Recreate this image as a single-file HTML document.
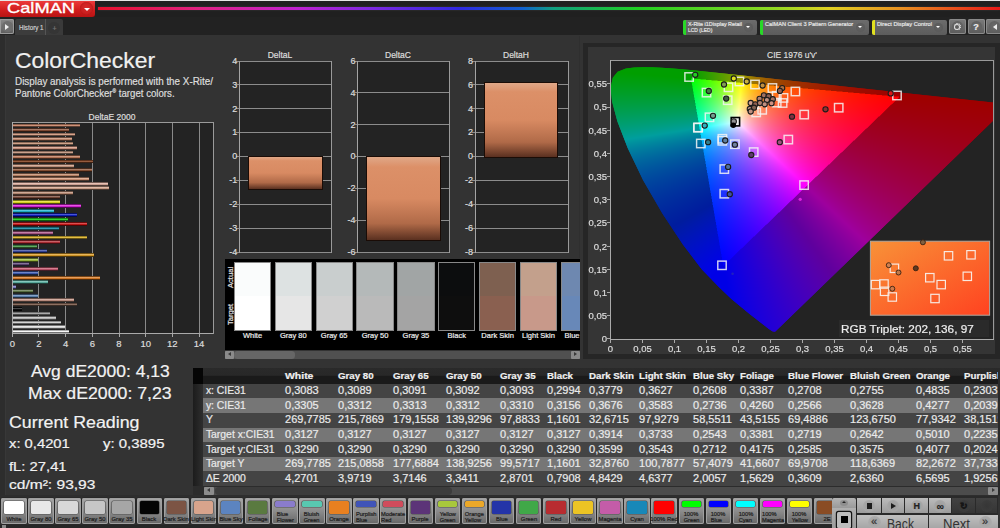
<!DOCTYPE html>
<html><head><meta charset="utf-8"><style>
html,body{margin:0;padding:0;}
body{width:1000px;height:528px;overflow:hidden;position:relative;background:#333;font-family:"Liberation Sans", sans-serif;}
.r{position:absolute;}
.t{position:absolute;white-space:nowrap;line-height:1;-webkit-text-stroke:0.2px currentColor;}
</style></head><body>
<div class="r" style="left:0px;top:0px;width:1000px;height:17px;background:#202020"></div>
<div class="r" style="left:0px;top:0px;width:1000px;height:1px;background:#e6e6e6"></div>
<div class="r" style="left:0px;top:1px;width:95px;height:16px;background:linear-gradient(#ec3a3a,#d01c1c 60%,#b81414);border-radius:0 0 3px 0;box-shadow:0 1px 0 #5a1010"></div>
<div class="t" style="left:7.00px;top:1.07px;font-size:14.8px;color:#fff;font-weight:normal;transform-origin:0 0;transform:scaleX(1.2345);-webkit-text-stroke:0.35px #fff">CalMAN</div>
<div class="r" style="left:80px;top:2px;width:13px;height:13px;border-radius:50%;background:radial-gradient(circle at 50% 40%,#d82a2a,#c01818);box-shadow:inset 0 0 1px #a01010"></div>
<div class="r" style="left:83.5px;top:7.5px;width:0;height:0;border-left:3px solid transparent;border-right:3px solid transparent;border-top:3px solid #fff"></div>
<div class="r" style="left:98px;top:7px;width:902px;height:3px;background:linear-gradient(90deg,#e8102a 0%,#e02080 11%,#c020d0 22%,#8028e0 30%,#3028e0 40%,#1060d0 47%,#10a080 50.5%,#20d020 60%,#90d820 75%,#e0d020 81%,#e89020 89%,#e81818 100%);box-shadow:0 0 2px rgba(255,255,255,0.15)"></div>
<div class="r" style="left:0px;top:17px;width:1000px;height:18px;background:#222"></div>
<div class="r" style="left:0px;top:19px;width:14px;height:15px;background:linear-gradient(#8a8a8a,#5c5c5c);border-radius:0 2px 2px 0;box-shadow:inset 0 0 0 1px #9a9a9a"></div>
<div class="r" style="left:1.5px;top:21px;width:11px;height:11px;border-radius:50%;background:#6e6e6e"></div>
<div class="r" style="left:5px;top:23.5px;width:0;height:0;border-top:3.5px solid transparent;border-bottom:3.5px solid transparent;border-left:4px solid #eee"></div>
<div class="r" style="left:15px;top:19px;width:30px;height:16px;background:#3c3c3c;border-radius:2px 0 0 0"></div>
<div class="t" style="left:18.50px;top:24.03px;font-size:8px;color:#d0d0d0;font-weight:normal;transform-origin:0 0;transform:scaleX(0.7762);">History 1</div>
<div class="r" style="left:45px;top:19px;width:1px;height:16px;background:#555"></div>
<div class="r" style="left:46px;top:19px;width:17px;height:16px;background:#3a3a3a;border-radius:0 2px 0 0"></div>
<div class="r" style="left:48px;top:22px;width:12px;height:12px;border-radius:50%;background:#353535"></div>
<div class="t" style="left:49.50px;width:10px;text-align:center;top:24.57px;font-size:7px;color:#777;font-weight:normal;transform-origin:50% 0;">+</div>
<div class="r" style="left:683px;top:19.5px;width:74px;height:15.2px;background:linear-gradient(#6c6c6c,#5c5c5c);border-radius:2px"></div>
<div class="r" style="left:683px;top:19.5px;width:3px;height:15.2px;background:#28d828;border-radius:2px 0 0 2px"></div>
<div class="t" style="left:688.00px;top:20.95px;font-size:6.2px;color:#e8e8e8;font-weight:normal;transform-origin:0 0;transform:scaleX(0.8773);">X-Rite i1Display Retail</div>
<div class="t" style="left:688.00px;top:27.35px;font-size:6.2px;color:#e8e8e8;font-weight:normal;transform-origin:0 0;transform:scaleX(0.8032);">LCD (LED)</div>
<div class="r" style="left:743.8px;top:22.8px;width:9.4px;height:9.4px;border-radius:50%;background:radial-gradient(#646464,#565656)"></div>
<div class="r" style="left:745.7px;top:26.3px;width:0;height:0;border-left:2.8px solid transparent;border-right:2.8px solid transparent;border-top:2.8px solid #fff"></div>
<div class="r" style="left:760px;top:19.5px;width:109px;height:15.2px;background:linear-gradient(#6c6c6c,#5c5c5c);border-radius:2px"></div>
<div class="r" style="left:760px;top:19.5px;width:3px;height:15.2px;background:#28d828;border-radius:2px 0 0 2px"></div>
<div class="t" style="left:765.00px;top:20.95px;font-size:6.2px;color:#e8e8e8;font-weight:normal;transform-origin:0 0;transform:scaleX(0.9095);">CalMAN Client 3 Pattern Generator</div>
<div class="r" style="left:855.8px;top:22.8px;width:9.4px;height:9.4px;border-radius:50%;background:radial-gradient(#646464,#565656)"></div>
<div class="r" style="left:857.7px;top:26.3px;width:0;height:0;border-left:2.8px solid transparent;border-right:2.8px solid transparent;border-top:2.8px solid #fff"></div>
<div class="r" style="left:872px;top:19.5px;width:75px;height:15.2px;background:linear-gradient(#6c6c6c,#5c5c5c);border-radius:2px"></div>
<div class="r" style="left:872px;top:19.5px;width:3px;height:15.2px;background:#e0e020;border-radius:2px 0 0 2px"></div>
<div class="t" style="left:877.00px;top:20.95px;font-size:6.2px;color:#e8e8e8;font-weight:normal;transform-origin:0 0;transform:scaleX(0.9193);">Direct Display Control</div>
<div class="r" style="left:933.8px;top:22.8px;width:9.4px;height:9.4px;border-radius:50%;background:radial-gradient(#646464,#565656)"></div>
<div class="r" style="left:935.7px;top:26.3px;width:0;height:0;border-left:2.8px solid transparent;border-right:2.8px solid transparent;border-top:2.8px solid #fff"></div>
<div class="r" style="left:948.5px;top:19.2px;width:17.2px;height:14.7px;background:linear-gradient(#7c7c7c,#5a5a5a);border-radius:2px;box-shadow:inset 0 0 0 1px #8a8a8a"></div>
<div class="r" style="left:951.6px;top:21px;width:11px;height:11px;border-radius:50%;background:radial-gradient(#6a6a6a,#5c5c5c)"></div>
<div class="r" style="left:953.6px;top:23px;width:5px;height:5px;border-radius:50%;border:1.5px dotted #eee"></div>
<div class="r" style="left:955.1px;top:24.5px;width:4px;height:4px;border-radius:50%;background:#5e5e5e;box-shadow:0 0 0 1px #ddd"></div>
<div class="r" style="left:967.5px;top:19.2px;width:17.2px;height:14.7px;background:linear-gradient(#7c7c7c,#5a5a5a);border-radius:2px;box-shadow:inset 0 0 0 1px #8a8a8a"></div>
<div class="r" style="left:970.6px;top:21px;width:11px;height:11px;border-radius:50%;background:radial-gradient(#6a6a6a,#5c5c5c)"></div>
<div class="t" style="left:968.10px;width:16px;text-align:center;top:22.88px;font-size:9px;color:#eee;font-weight:bold;transform-origin:50% 0;">?</div>
<div class="r" style="left:986px;top:19.2px;width:17.2px;height:14.7px;background:linear-gradient(#7c7c7c,#5a5a5a);border-radius:2px;box-shadow:inset 0 0 0 1px #8a8a8a"></div>
<div class="r" style="left:989.1px;top:21px;width:11px;height:11px;border-radius:50%;background:radial-gradient(#6a6a6a,#5c5c5c)"></div>
<div class="r" style="left:992.5px;top:23.5px;width:0;height:0;border-top:3px solid transparent;border-bottom:3px solid transparent;border-right:4px solid #eee"></div>
<div class="r" style="left:0px;top:35px;width:1000px;height:493px;background:#333"></div>
<div class="r" style="left:0px;top:35px;width:5px;height:460px;background:#2d2d2d"></div>
<div class="r" style="left:5px;top:35px;width:1px;height:460px;background:#383838"></div>
<div class="t" style="left:15.00px;top:49.55px;font-size:21.8px;color:#f0f0f0;font-weight:normal;transform-origin:0 0;transform:scaleX(1.0507);">ColorChecker</div>
<div class="t" style="left:15.00px;top:77.13px;font-size:10px;color:#ddd;font-weight:normal;transform-origin:0 0;transform:scaleX(0.9869);">Display analysis is performed with the X-Rite/</div>
<div class="t" style="left:15.00px;top:89.33px;font-size:10px;color:#ddd;font-weight:normal;transform-origin:0 0;transform:scaleX(0.9645);">Pantone ColorChecker<span style="font-size:5px;vertical-align:4px">®</span> target colors.</div>
<div class="t" style="left:52.00px;width:120px;text-align:center;top:113.30px;font-size:8.5px;color:#ddd;font-weight:normal;transform-origin:50% 0;">DeltaE 2000</div>
<div class="r" style="left:12.3px;top:122.8px;width:201.1px;height:210.95px;background:#232323"></div>
<div class="r" style="left:38.48px;top:122.8px;width:1px;height:210.95px;background:#8a8a8a"></div>
<div class="r" style="left:65.16px;top:122.8px;width:1px;height:210.95px;background:#8a8a8a"></div>
<div class="r" style="left:91.84px;top:122.8px;width:1px;height:210.95px;background:#8a8a8a"></div>
<div class="r" style="left:118.52px;top:122.8px;width:1px;height:210.95px;background:#8a8a8a"></div>
<div class="r" style="left:145.2px;top:122.8px;width:1px;height:210.95px;background:#8a8a8a"></div>
<div class="r" style="left:171.88px;top:122.8px;width:1px;height:210.95px;background:#8a8a8a"></div>
<div class="r" style="left:198.56px;top:122.8px;width:1px;height:210.95px;background:#8a8a8a"></div>
<div class="r" style="left:11.8px;top:122.3px;width:201.6px;height:1px;background:#9a9a9a"></div>
<div class="r" style="left:212.9px;top:122.3px;width:1px;height:211.45px;background:#9a9a9a"></div>
<div class="r" style="left:11.8px;top:122.3px;width:1px;height:213.95px;background:#aaa"></div>
<div class="r" style="left:11.8px;top:333.25px;width:201.6px;height:1px;background:#aaa"></div>
<div class="r" style="left:11.8px;top:333.75px;width:1px;height:3px;background:#aaa"></div>
<div class="t" style="left:-2.70px;width:30px;text-align:center;top:339.46px;font-size:9.5px;color:#ddd;font-weight:normal;transform-origin:50% 0;">0</div>
<div class="r" style="left:38.48px;top:333.75px;width:1px;height:3px;background:#aaa"></div>
<div class="t" style="left:23.98px;width:30px;text-align:center;top:339.46px;font-size:9.5px;color:#ddd;font-weight:normal;transform-origin:50% 0;">2</div>
<div class="r" style="left:65.16px;top:333.75px;width:1px;height:3px;background:#aaa"></div>
<div class="t" style="left:50.66px;width:30px;text-align:center;top:339.46px;font-size:9.5px;color:#ddd;font-weight:normal;transform-origin:50% 0;">4</div>
<div class="r" style="left:91.84px;top:333.75px;width:1px;height:3px;background:#aaa"></div>
<div class="t" style="left:77.34px;width:30px;text-align:center;top:339.46px;font-size:9.5px;color:#ddd;font-weight:normal;transform-origin:50% 0;">6</div>
<div class="r" style="left:118.52px;top:333.75px;width:1px;height:3px;background:#aaa"></div>
<div class="t" style="left:104.02px;width:30px;text-align:center;top:339.46px;font-size:9.5px;color:#ddd;font-weight:normal;transform-origin:50% 0;">8</div>
<div class="r" style="left:145.2px;top:333.75px;width:1px;height:3px;background:#aaa"></div>
<div class="t" style="left:130.70px;width:30px;text-align:center;top:339.46px;font-size:9.5px;color:#ddd;font-weight:normal;transform-origin:50% 0;">10</div>
<div class="r" style="left:171.88px;top:333.75px;width:1px;height:3px;background:#aaa"></div>
<div class="t" style="left:157.38px;width:30px;text-align:center;top:339.46px;font-size:9.5px;color:#ddd;font-weight:normal;transform-origin:50% 0;">12</div>
<div class="r" style="left:198.56px;top:333.75px;width:1px;height:3px;background:#aaa"></div>
<div class="t" style="left:184.06px;width:30px;text-align:center;top:339.46px;font-size:9.5px;color:#ddd;font-weight:normal;transform-origin:50% 0;">14</div>
<div class="r" style="left:12.90px;top:123.70px;width:67.30px;height:3.8px;background:linear-gradient(#000 0%, #96644f 18%, #d5a48f 38%, #c8866a 58%, #644335 82%, #000 100%)"></div>
<div class="r" style="left:12.90px;top:128.17px;width:56.36px;height:3.8px;background:linear-gradient(#000 0%, #673c2a 18%, #a77b69 38%, #8a5038 58%, #45281c 82%, #000 100%)"></div>
<div class="r" style="left:12.90px;top:132.65px;width:61.83px;height:3.8px;background:linear-gradient(#000 0%, #9d7360 18%, #ddb39f 38%, #d29a80 58%, #694d40 82%, #000 100%)"></div>
<div class="r" style="left:12.90px;top:137.12px;width:58.63px;height:3.8px;background:linear-gradient(#000 0%, #966954 18%, #d5a893 38%, #c88c70 58%, #644638 82%, #000 100%)"></div>
<div class="r" style="left:12.90px;top:141.60px;width:60.50px;height:3.8px;background:linear-gradient(#000 0%, #99735e 18%, #d8b39e 38%, #cc9a7e 58%, #664d3f 82%, #000 100%)"></div>
<div class="r" style="left:12.90px;top:146.07px;width:63.83px;height:3.8px;background:linear-gradient(#000 0%, #a07363 18%, #e0b3a2 38%, #d69a84 58%, #6b4d42 82%, #000 100%)"></div>
<div class="r" style="left:12.90px;top:150.55px;width:59.83px;height:3.8px;background:linear-gradient(#000 0%, #937261 18%, #d2b1a1 38%, #c49882 58%, #624c41 82%, #000 100%)"></div>
<div class="r" style="left:12.90px;top:155.02px;width:66.63px;height:3.8px;background:linear-gradient(#000 0%, #905b43 18%, #cf9b83 38%, #c07a5a 58%, #603d2d 82%, #000 100%)"></div>
<div class="r" style="left:12.90px;top:159.50px;width:80.37px;height:3.8px;background:linear-gradient(#000 0%, #67371f 18%, #a7775f 38%, #8a4a2a 58%, #452515 82%, #000 100%)"></div>
<div class="r" style="left:12.90px;top:163.97px;width:61.16px;height:3.8px;background:linear-gradient(#000 0%, #997361 18%, #d8b3a1 38%, #cc9a82 58%, #664d41 82%, #000 100%)"></div>
<div class="r" style="left:12.90px;top:168.45px;width:79.57px;height:3.8px;background:linear-gradient(#000 0%, #6a3f28 18%, #aa7e68 38%, #8e5436 58%, #472a1b 82%, #000 100%)"></div>
<div class="r" style="left:12.90px;top:172.92px;width:65.97px;height:3.8px;background:linear-gradient(#000 0%, #93674f 18%, #d2a78f 38%, #c48a6a 58%, #624535 82%, #000 100%)"></div>
<div class="r" style="left:12.90px;top:177.40px;width:75.84px;height:3.8px;background:linear-gradient(#000 0%, #a2735b 18%, #e1b39b 38%, #d89a7a 58%, #6c4d3d 82%, #000 100%)"></div>
<div class="r" style="left:12.90px;top:181.87px;width:95.05px;height:3.8px;background:linear-gradient(#000 0%, #a88478 18%, #e7c3b7 38%, #e0b0a0 58%, #705850 82%, #000 100%)"></div>
<div class="r" style="left:12.90px;top:186.35px;width:95.71px;height:3.8px;background:linear-gradient(#000 0%, #a27e6c 18%, #e1bdab 38%, #d8a890 58%, #6c5448 82%, #000 100%)"></div>
<div class="r" style="left:12.90px;top:190.82px;width:60.50px;height:3.8px;background:linear-gradient(#000 0%, #906c5a 18%, #cfab99 38%, #c09078 58%, #60483c 82%, #000 100%)"></div>
<div class="r" style="left:12.90px;top:195.30px;width:47.56px;height:3.8px;background:linear-gradient(#000 0%, #5b372b 18%, #9b776b 38%, #7a4a3a 58%, #3d251d 82%, #000 100%)"></div>
<div class="r" style="left:12.90px;top:199.77px;width:47.56px;height:3.8px;background:linear-gradient(#000 0%, #aca818 18%, #ece757 38%, #e6e020 58%, #737010 82%, #000 100%)"></div>
<div class="r" style="left:12.90px;top:204.25px;width:67.83px;height:3.8px;background:linear-gradient(#000 0%, #a818a8 18%, #e757e7 38%, #e020e0 58%, #701070 82%, #000 100%)"></div>
<div class="r" style="left:12.90px;top:208.72px;width:41.42px;height:3.8px;background:linear-gradient(#000 0%, #188a9c 18%, #57c9db 38%, #20b8d0 58%, #105c68 82%, #000 100%)"></div>
<div class="r" style="left:12.90px;top:213.20px;width:64.37px;height:3.8px;background:linear-gradient(#000 0%, #0c1896 18%, #4b57d5 38%, #1020c8 58%, #081064 82%, #000 100%)"></div>
<div class="r" style="left:12.90px;top:217.67px;width:55.16px;height:3.8px;background:linear-gradient(#000 0%, #189c18 18%, #57db57 38%, #20d020 58%, #106810 82%, #000 100%)"></div>
<div class="r" style="left:12.90px;top:222.15px;width:74.10px;height:3.8px;background:linear-gradient(#000 0%, #9c1212 18%, #db5151 38%, #d01818 58%, #680c0c 82%, #000 100%)"></div>
<div class="r" style="left:12.90px;top:226.62px;width:46.09px;height:3.8px;background:linear-gradient(#000 0%, #186c7e 18%, #57abbd 38%, #2090a8 58%, #104854 82%, #000 100%)"></div>
<div class="r" style="left:12.90px;top:231.10px;width:39.95px;height:3.8px;background:linear-gradient(#000 0%, #844367 18%, #c383a7 38%, #b05a8a 58%, #582d45 82%, #000 100%)"></div>
<div class="r" style="left:12.90px;top:235.57px;width:73.84px;height:3.8px;background:linear-gradient(#000 0%, #a88a24 18%, #e7c963 38%, #e0b830 58%, #705c18 82%, #000 100%)"></div>
<div class="r" style="left:12.90px;top:240.05px;width:47.56px;height:3.8px;background:linear-gradient(#000 0%, #8a242a 18%, #c96369 38%, #b83038 58%, #5c181c 82%, #000 100%)"></div>
<div class="r" style="left:12.90px;top:244.52px;width:23.95px;height:3.8px;background:linear-gradient(#000 0%, #3c783c 18%, #7bb77b 38%, #50a050 58%, #285028 82%, #000 100%)"></div>
<div class="r" style="left:12.90px;top:249.00px;width:33.95px;height:3.8px;background:linear-gradient(#000 0%, #2a3678 18%, #6975b7 38%, #3848a0 58%, #1c2450 82%, #000 100%)"></div>
<div class="r" style="left:12.90px;top:253.47px;width:81.57px;height:3.8px;background:linear-gradient(#000 0%, #a8781e 18%, #e7b75d 38%, #e0a028 58%, #705014 82%, #000 100%)"></div>
<div class="r" style="left:12.90px;top:257.95px;width:25.55px;height:3.8px;background:linear-gradient(#000 0%, #789030 18%, #b7cf6f 38%, #a0c040 58%, #506020 82%, #000 100%)"></div>
<div class="r" style="left:12.90px;top:262.43px;width:16.07px;height:3.8px;background:linear-gradient(#000 0%, #48365a 18%, #877599 38%, #604878 58%, #30243c 82%, #000 100%)"></div>
<div class="r" style="left:12.90px;top:266.90px;width:44.76px;height:3.8px;background:linear-gradient(#000 0%, #964254 18%, #d58193 38%, #c85870 58%, #642c38 82%, #000 100%)"></div>
<div class="r" style="left:12.90px;top:271.38px;width:24.75px;height:3.8px;background:linear-gradient(#000 0%, #30488a 18%, #6f87c9 38%, #4060b8 58%, #20305c 82%, #000 100%)"></div>
<div class="r" style="left:12.90px;top:275.85px;width:87.04px;height:3.8px;background:linear-gradient(#000 0%, #a8601e 18%, #e79f5d 38%, #e08028 58%, #704014 82%, #000 100%)"></div>
<div class="r" style="left:12.90px;top:280.33px;width:34.88px;height:3.8px;background:linear-gradient(#000 0%, #488a7e 18%, #87c9bd 38%, #60b8a8 58%, #305c54 82%, #000 100%)"></div>
<div class="r" style="left:12.90px;top:284.80px;width:3.27px;height:3.8px;background:linear-gradient(#000 0%, #606096 18%, #9f9fd5 38%, #8080c8 58%, #404064 82%, #000 100%)"></div>
<div class="r" style="left:12.90px;top:289.27px;width:20.08px;height:3.8px;background:linear-gradient(#000 0%, #485a36 18%, #879975 38%, #607848 58%, #303c24 82%, #000 100%)"></div>
<div class="r" style="left:12.90px;top:293.75px;width:25.55px;height:3.8px;background:linear-gradient(#000 0%, #48668a 18%, #87a5c9 38%, #6088b8 58%, #30445c 82%, #000 100%)"></div>
<div class="r" style="left:12.90px;top:298.23px;width:61.56px;height:3.8px;background:linear-gradient(#000 0%, #967266 18%, #d5b1a5 38%, #c89888 58%, #644c44 82%, #000 100%)"></div>
<div class="r" style="left:12.90px;top:302.70px;width:63.97px;height:3.8px;background:linear-gradient(#000 0%, #60483c 18%, #9f877b 38%, #806050 58%, #403028 82%, #000 100%)"></div>
<div class="r" style="left:12.90px;top:307.18px;width:9.27px;height:3.8px;background:linear-gradient(#000 0%, #0c0c0c 18%, #4b4b4b 38%, #101010 58%, #080808 82%, #000 100%)"></div>
<div class="r" style="left:12.90px;top:311.65px;width:37.55px;height:3.8px;background:linear-gradient(#000 0%, #787878 18%, #b7b7b7 38%, #a0a0a0 58%, #505050 82%, #000 100%)"></div>
<div class="r" style="left:12.90px;top:316.12px;width:43.42px;height:3.8px;background:linear-gradient(#000 0%, #909090 18%, #cfcfcf 38%, #c0c0c0 58%, #606060 82%, #000 100%)"></div>
<div class="r" style="left:12.90px;top:320.60px;width:48.22px;height:3.8px;background:linear-gradient(#000 0%, #9c9c9c 18%, #dbdbdb 38%, #d0d0d0 58%, #686868 82%, #000 100%)"></div>
<div class="r" style="left:12.90px;top:325.07px;width:52.36px;height:3.8px;background:linear-gradient(#000 0%, #ababab 18%, #eaeaea 38%, #e4e4e4 58%, #727272 82%, #000 100%)"></div>
<div class="r" style="left:12.90px;top:329.55px;width:56.23px;height:3.8px;background:linear-gradient(#000 0%, #bababa 18%, #f9f9f9 38%, #f8f8f8 58%, #7c7c7c 82%, #000 100%)"></div>
<div class="t" style="left:240.00px;width:80px;text-align:center;top:51.30px;font-size:8.5px;color:#ddd;font-weight:normal;transform-origin:50% 0;">DeltaL</div>
<div class="r" style="left:239.3px;top:61.0px;width:92.09999999999997px;height:191.5px;background:#232323"></div>
<div class="r" style="left:236.3px;top:60.5px;width:95.09999999999997px;height:1px;background:#8c8c8c"></div>
<div class="t" style="left:207.30px;width:30px;text-align:right;top:56.68px;font-size:9px;color:#ddd;font-weight:normal;transform-origin:100% 0;">4</div>
<div class="r" style="left:236.3px;top:84.44px;width:95.09999999999997px;height:1px;background:#8c8c8c"></div>
<div class="t" style="left:207.30px;width:30px;text-align:right;top:80.62px;font-size:9px;color:#ddd;font-weight:normal;transform-origin:100% 0;">3</div>
<div class="r" style="left:236.3px;top:108.38px;width:95.09999999999997px;height:1px;background:#8c8c8c"></div>
<div class="t" style="left:207.30px;width:30px;text-align:right;top:104.56px;font-size:9px;color:#ddd;font-weight:normal;transform-origin:100% 0;">2</div>
<div class="r" style="left:236.3px;top:132.31px;width:95.09999999999997px;height:1px;background:#8c8c8c"></div>
<div class="t" style="left:207.30px;width:30px;text-align:right;top:128.49px;font-size:9px;color:#ddd;font-weight:normal;transform-origin:100% 0;">1</div>
<div class="r" style="left:236.3px;top:156.25px;width:95.09999999999997px;height:1px;background:#8c8c8c"></div>
<div class="t" style="left:207.30px;width:30px;text-align:right;top:152.43px;font-size:9px;color:#ddd;font-weight:normal;transform-origin:100% 0;">0</div>
<div class="r" style="left:236.3px;top:180.19px;width:95.09999999999997px;height:1px;background:#8c8c8c"></div>
<div class="t" style="left:207.30px;width:30px;text-align:right;top:176.37px;font-size:9px;color:#ddd;font-weight:normal;transform-origin:100% 0;">-1</div>
<div class="r" style="left:236.3px;top:204.12px;width:95.09999999999997px;height:1px;background:#8c8c8c"></div>
<div class="t" style="left:207.30px;width:30px;text-align:right;top:200.31px;font-size:9px;color:#ddd;font-weight:normal;transform-origin:100% 0;">-2</div>
<div class="r" style="left:236.3px;top:228.06px;width:95.09999999999997px;height:1px;background:#8c8c8c"></div>
<div class="t" style="left:207.30px;width:30px;text-align:right;top:224.24px;font-size:9px;color:#ddd;font-weight:normal;transform-origin:100% 0;">-3</div>
<div class="r" style="left:236.3px;top:252.0px;width:95.09999999999997px;height:1px;background:#8c8c8c"></div>
<div class="t" style="left:207.30px;width:30px;text-align:right;top:248.18px;font-size:9px;color:#ddd;font-weight:normal;transform-origin:100% 0;">-4</div>
<div class="r" style="left:238.8px;top:60.5px;width:1px;height:192.5px;background:#a4a4a4"></div>
<div class="r" style="left:330.9px;top:60.5px;width:1px;height:192.5px;background:#9a9a9a"></div>
<div class="r" style="left:248.5px;top:156.75px;width:73.0px;height:31.84px;background:linear-gradient(#e0a888 0%,#dc9068 12%,#d88a62 50%,#b06a48 80%,#5a3020 100%);box-shadow:0 0 0 1px #1a0c06"></div>
<div class="t" style="left:358.00px;width:80px;text-align:center;top:51.30px;font-size:8.5px;color:#ddd;font-weight:normal;transform-origin:50% 0;">DeltaC</div>
<div class="r" style="left:357.6px;top:61.0px;width:92.0px;height:191.5px;background:#232323"></div>
<div class="r" style="left:354.6px;top:60.5px;width:95.0px;height:1px;background:#8c8c8c"></div>
<div class="t" style="left:325.60px;width:30px;text-align:right;top:56.68px;font-size:9px;color:#ddd;font-weight:normal;transform-origin:100% 0;">6</div>
<div class="r" style="left:354.6px;top:92.42px;width:95.0px;height:1px;background:#8c8c8c"></div>
<div class="t" style="left:325.60px;width:30px;text-align:right;top:88.60px;font-size:9px;color:#ddd;font-weight:normal;transform-origin:100% 0;">4</div>
<div class="r" style="left:354.6px;top:124.33px;width:95.0px;height:1px;background:#8c8c8c"></div>
<div class="t" style="left:325.60px;width:30px;text-align:right;top:120.51px;font-size:9px;color:#ddd;font-weight:normal;transform-origin:100% 0;">2</div>
<div class="r" style="left:354.6px;top:156.25px;width:95.0px;height:1px;background:#8c8c8c"></div>
<div class="t" style="left:325.60px;width:30px;text-align:right;top:152.43px;font-size:9px;color:#ddd;font-weight:normal;transform-origin:100% 0;">0</div>
<div class="r" style="left:354.6px;top:188.17px;width:95.0px;height:1px;background:#8c8c8c"></div>
<div class="t" style="left:325.60px;width:30px;text-align:right;top:184.35px;font-size:9px;color:#ddd;font-weight:normal;transform-origin:100% 0;">-2</div>
<div class="r" style="left:354.6px;top:220.08px;width:95.0px;height:1px;background:#8c8c8c"></div>
<div class="t" style="left:325.60px;width:30px;text-align:right;top:216.26px;font-size:9px;color:#ddd;font-weight:normal;transform-origin:100% 0;">-4</div>
<div class="r" style="left:354.6px;top:252.0px;width:95.0px;height:1px;background:#8c8c8c"></div>
<div class="t" style="left:325.60px;width:30px;text-align:right;top:248.18px;font-size:9px;color:#ddd;font-weight:normal;transform-origin:100% 0;">-6</div>
<div class="r" style="left:357.1px;top:60.5px;width:1px;height:192.5px;background:#a4a4a4"></div>
<div class="r" style="left:449.1px;top:60.5px;width:1px;height:192.5px;background:#9a9a9a"></div>
<div class="r" style="left:366.7px;top:156.75px;width:72.90000000000003px;height:82.98px;background:linear-gradient(#e0a888 0%,#dc9068 12%,#d88a62 50%,#b06a48 80%,#5a3020 100%);box-shadow:0 0 0 1px #1a0c06"></div>
<div class="t" style="left:476.00px;width:80px;text-align:center;top:51.30px;font-size:8.5px;color:#ddd;font-weight:normal;transform-origin:50% 0;">DeltaH</div>
<div class="r" style="left:475.0px;top:61.0px;width:93.0px;height:191.5px;background:#232323"></div>
<div class="r" style="left:472.0px;top:60.5px;width:96.0px;height:1px;background:#8c8c8c"></div>
<div class="t" style="left:443.00px;width:30px;text-align:right;top:56.68px;font-size:9px;color:#ddd;font-weight:normal;transform-origin:100% 0;">8</div>
<div class="r" style="left:472.0px;top:84.44px;width:96.0px;height:1px;background:#8c8c8c"></div>
<div class="t" style="left:443.00px;width:30px;text-align:right;top:80.62px;font-size:9px;color:#ddd;font-weight:normal;transform-origin:100% 0;">6</div>
<div class="r" style="left:472.0px;top:108.38px;width:96.0px;height:1px;background:#8c8c8c"></div>
<div class="t" style="left:443.00px;width:30px;text-align:right;top:104.56px;font-size:9px;color:#ddd;font-weight:normal;transform-origin:100% 0;">4</div>
<div class="r" style="left:472.0px;top:132.31px;width:96.0px;height:1px;background:#8c8c8c"></div>
<div class="t" style="left:443.00px;width:30px;text-align:right;top:128.49px;font-size:9px;color:#ddd;font-weight:normal;transform-origin:100% 0;">2</div>
<div class="r" style="left:472.0px;top:156.25px;width:96.0px;height:1px;background:#8c8c8c"></div>
<div class="t" style="left:443.00px;width:30px;text-align:right;top:152.43px;font-size:9px;color:#ddd;font-weight:normal;transform-origin:100% 0;">0</div>
<div class="r" style="left:472.0px;top:180.19px;width:96.0px;height:1px;background:#8c8c8c"></div>
<div class="t" style="left:443.00px;width:30px;text-align:right;top:176.37px;font-size:9px;color:#ddd;font-weight:normal;transform-origin:100% 0;">-2</div>
<div class="r" style="left:472.0px;top:204.12px;width:96.0px;height:1px;background:#8c8c8c"></div>
<div class="t" style="left:443.00px;width:30px;text-align:right;top:200.31px;font-size:9px;color:#ddd;font-weight:normal;transform-origin:100% 0;">-4</div>
<div class="r" style="left:472.0px;top:228.06px;width:96.0px;height:1px;background:#8c8c8c"></div>
<div class="t" style="left:443.00px;width:30px;text-align:right;top:224.24px;font-size:9px;color:#ddd;font-weight:normal;transform-origin:100% 0;">-6</div>
<div class="r" style="left:472.0px;top:252.0px;width:96.0px;height:1px;background:#8c8c8c"></div>
<div class="t" style="left:443.00px;width:30px;text-align:right;top:248.18px;font-size:9px;color:#ddd;font-weight:normal;transform-origin:100% 0;">-8</div>
<div class="r" style="left:474.5px;top:60.5px;width:1px;height:192.5px;background:#a4a4a4"></div>
<div class="r" style="left:567.5px;top:60.5px;width:1px;height:192.5px;background:#9a9a9a"></div>
<div class="r" style="left:485.4px;top:82.90px;width:72.10000000000002px;height:73.85px;background:linear-gradient(#e0a888 0%,#dc9068 12%,#d88a62 50%,#b06a48 80%,#5a3020 100%);box-shadow:0 0 0 1px #1a0c06"></div>
<div class="r" style="left:225px;top:258.75px;width:355px;height:91px;background:#000"></div>
<div class="t" style="left:235.00px;top:295.57px;font-size:7.6px;color:#e0e0e0;font-weight:normal;transform-origin:0 0;transform-origin:0 0;transform:rotate(-90deg);left:226.8px;top:287.6px">Actual</div>
<div class="t" style="left:235.00px;top:333.57px;font-size:7.6px;color:#e0e0e0;font-weight:normal;transform-origin:0 0;transform-origin:0 0;transform:rotate(-90deg);left:226.8px;top:324.5px">Target</div>
<div class="r" style="left:234.80px;top:262.9px;width:35.4px;height:66.7px;box-shadow:0 0 0 1px #888;background:linear-gradient(#fafcfc 0%,#fafcfc 50%,#ffffff 50%,#ffffff 100%)"></div>
<div class="t" style="left:222.50px;width:60px;text-align:center;top:331.65px;font-size:7.5px;color:#eee;font-weight:normal;transform-origin:50% 0;">White</div>
<div class="r" style="left:275.65px;top:262.9px;width:35.4px;height:66.7px;box-shadow:0 0 0 1px #888;background:linear-gradient(#dde2e2 0%,#dde2e2 50%,#e6e6e6 50%,#e6e6e6 100%)"></div>
<div class="t" style="left:263.35px;width:60px;text-align:center;top:331.65px;font-size:7.5px;color:#eee;font-weight:normal;transform-origin:50% 0;">Gray 80</div>
<div class="r" style="left:316.50px;top:262.9px;width:35.4px;height:66.7px;box-shadow:0 0 0 1px #888;background:linear-gradient(#c9cece 0%,#c9cece 50%,#d0d0d0 50%,#d0d0d0 100%)"></div>
<div class="t" style="left:304.20px;width:60px;text-align:center;top:331.65px;font-size:7.5px;color:#eee;font-weight:normal;transform-origin:50% 0;">Gray 65</div>
<div class="r" style="left:357.35px;top:262.9px;width:35.4px;height:66.7px;box-shadow:0 0 0 1px #888;background:linear-gradient(#b4b9b9 0%,#b4b9b9 50%,#bababa 50%,#bababa 100%)"></div>
<div class="t" style="left:345.05px;width:60px;text-align:center;top:331.65px;font-size:7.5px;color:#eee;font-weight:normal;transform-origin:50% 0;">Gray 50</div>
<div class="r" style="left:398.20px;top:262.9px;width:35.4px;height:66.7px;box-shadow:0 0 0 1px #888;background:linear-gradient(#a1a5a5 0%,#a1a5a5 50%,#a4a4a4 50%,#a4a4a4 100%)"></div>
<div class="t" style="left:385.90px;width:60px;text-align:center;top:331.65px;font-size:7.5px;color:#eee;font-weight:normal;transform-origin:50% 0;">Gray 35</div>
<div class="r" style="left:439.05px;top:262.9px;width:35.4px;height:66.7px;box-shadow:0 0 0 1px #888;background:linear-gradient(#0c0d0e 0%,#0c0d0e 50%,#0e0e0e 50%,#0e0e0e 100%)"></div>
<div class="t" style="left:426.75px;width:60px;text-align:center;top:331.65px;font-size:7.5px;color:#eee;font-weight:normal;transform-origin:50% 0;">Black</div>
<div class="r" style="left:479.90px;top:262.9px;width:35.4px;height:66.7px;box-shadow:0 0 0 1px #888;background:linear-gradient(#7e6050 0%,#7e6050 50%,#8a6050 50%,#8a6050 100%)"></div>
<div class="t" style="left:467.60px;width:60px;text-align:center;top:331.65px;font-size:7.5px;color:#eee;font-weight:normal;transform-origin:50% 0;">Dark Skin</div>
<div class="r" style="left:520.75px;top:262.9px;width:35.4px;height:66.7px;box-shadow:0 0 0 1px #888;background:linear-gradient(#c3a08c 0%,#c3a08c 50%,#c8998a 50%,#c8998a 100%)"></div>
<div class="t" style="left:508.45px;width:60px;text-align:center;top:331.65px;font-size:7.5px;color:#eee;font-weight:normal;transform-origin:50% 0;">Light Skin</div>
<div class="r" style="left:561.60px;top:262.9px;width:35.4px;height:66.7px;box-shadow:0 0 0 1px #888;background:linear-gradient(#6e88b0 0%,#6e88b0 50%,#6888b8 50%,#6888b8 100%)"></div>
<div class="t" style="left:549.30px;width:60px;text-align:center;top:331.65px;font-size:7.5px;color:#eee;font-weight:normal;transform-origin:50% 0;">Blue Sky</div>
<div class="r" style="left:579.7px;top:258.75px;width:3.3px;height:101px;background:#333"></div>
<div class="r" style="left:225px;top:350.9px;width:354.7px;height:8.3px;background:#505050"></div>
<div class="r" style="left:234px;top:351.3px;width:61px;height:7.5px;background:#666;border-radius:3.5px"></div>
<div class="r" style="left:225px;top:350.9px;width:8.8px;height:8.3px;background:#8a8a8a;border-radius:1px"></div>
<div class="r" style="left:227.5px;top:352.3px;width:0;height:0;border-top:2.8px solid transparent;border-bottom:2.8px solid transparent;border-right:3.5px solid #3a3a3a"></div>
<div class="r" style="left:570.6px;top:350.9px;width:9.1px;height:8.3px;background:#8a8a8a;border-radius:1px"></div>
<div class="r" style="left:573.5px;top:352.3px;width:0;height:0;border-top:2.8px solid transparent;border-bottom:2.8px solid transparent;border-left:3.5px solid #3a3a3a"></div>
<div class="t" style="left:30.90px;top:362.91px;font-size:17px;color:#f2f2f2;font-weight:normal;transform-origin:0 0;transform:scaleX(1.0285);">Avg dE2000: 4,13</div>
<div class="t" style="left:28.30px;top:385.21px;font-size:17px;color:#f2f2f2;font-weight:normal;transform-origin:0 0;transform:scaleX(1.0414);">Max dE2000: 7,23</div>
<div class="t" style="left:9.00px;top:413.53px;font-size:16.5px;color:#f2f2f2;font-weight:normal;transform-origin:0 0;transform:scaleX(1.0779);">Current Reading</div>
<div class="t" style="left:9.00px;top:437.96px;font-size:12.8px;color:#f2f2f2;font-weight:normal;transform-origin:0 0;transform:scaleX(1.1548);">x: 0,4201</div>
<div class="t" style="left:102.60px;top:437.96px;font-size:12.8px;color:#f2f2f2;font-weight:normal;transform-origin:0 0;transform:scaleX(1.1681);">y: 0,3895</div>
<div class="t" style="left:9.00px;top:460.56px;font-size:12.8px;color:#f2f2f2;font-weight:normal;transform-origin:0 0;transform:scaleX(1.1565);">fL: 27,41</div>
<div class="t" style="left:9.00px;top:478.76px;font-size:12.8px;color:#f2f2f2;font-weight:normal;transform-origin:0 0;transform:scaleX(1.2147);">cd/m²: 93,93</div>
<div class="r" style="left:193.3px;top:368.2px;width:806.7px;height:15.6px;background:linear-gradient(#2a2a2a 0%,#282828 46%,#1a1a1a 50%,#1a1a1a 100%)"></div>
<div class="r" style="left:193.3px;top:368.2px;width:9.7px;height:15.6px;background:#050505"></div>
<div class="t" style="left:285.00px;top:371.88px;font-size:9px;color:#f0f0f0;font-weight:bold;transform-origin:0 0;transform:scaleX(1.1600);">White</div>
<div class="t" style="left:338.40px;top:371.88px;font-size:9px;color:#f0f0f0;font-weight:bold;transform-origin:0 0;transform:scaleX(1.0800);">Gray 80</div>
<div class="t" style="left:392.50px;top:371.88px;font-size:9px;color:#f0f0f0;font-weight:bold;transform-origin:0 0;transform:scaleX(1.0800);">Gray 65</div>
<div class="t" style="left:446.10px;top:371.88px;font-size:9px;color:#f0f0f0;font-weight:bold;transform-origin:0 0;transform:scaleX(1.0800);">Gray 50</div>
<div class="t" style="left:499.70px;top:371.88px;font-size:9px;color:#f0f0f0;font-weight:bold;transform-origin:0 0;transform:scaleX(1.0800);">Gray 35</div>
<div class="t" style="left:547.00px;top:371.88px;font-size:9px;color:#f0f0f0;font-weight:bold;transform-origin:0 0;transform:scaleX(1.0800);">Black</div>
<div class="t" style="left:588.60px;top:371.88px;font-size:9px;color:#f0f0f0;font-weight:bold;transform-origin:0 0;transform:scaleX(1.0800);">Dark Skin</div>
<div class="t" style="left:638.80px;top:371.88px;font-size:9px;color:#f0f0f0;font-weight:bold;transform-origin:0 0;transform:scaleX(1.0800);">Light Skin</div>
<div class="t" style="left:692.80px;top:371.88px;font-size:9px;color:#f0f0f0;font-weight:bold;transform-origin:0 0;transform:scaleX(1.0800);">Blue Sky</div>
<div class="t" style="left:740.20px;top:371.88px;font-size:9px;color:#f0f0f0;font-weight:bold;transform-origin:0 0;transform:scaleX(1.0800);">Foliage</div>
<div class="t" style="left:787.50px;top:371.88px;font-size:9px;color:#f0f0f0;font-weight:bold;transform-origin:0 0;transform:scaleX(1.0800);">Blue Flower</div>
<div class="t" style="left:849.60px;top:371.88px;font-size:9px;color:#f0f0f0;font-weight:bold;transform-origin:0 0;transform:scaleX(1.0800);">Bluish Green</div>
<div class="t" style="left:916.00px;top:371.88px;font-size:9px;color:#f0f0f0;font-weight:bold;transform-origin:0 0;transform:scaleX(1.0800);">Orange</div>
<div class="t" style="left:963.50px;top:371.88px;font-size:9px;color:#f0f0f0;font-weight:bold;transform-origin:0 0;transform:scaleX(1.0800);">Purplish</div>
<div class="r" style="left:203.0px;top:383.8px;width:797.0px;height:14.6px;background:#444444"></div>
<div class="r" style="left:193.3px;top:383.8px;width:9.7px;height:14.6px;background:linear-gradient(90deg,#1c1c1c,#2e2e2e)"></div>
<div class="t" style="left:205.90px;top:386.10px;font-size:10.4px;color:#eaeaea;font-weight:normal;transform-origin:0 0;">x: CIE31</div>
<div class="t" style="left:285.00px;top:386.10px;font-size:10.4px;color:#eaeaea;font-weight:normal;transform-origin:0 0;transform:scaleX(1.0600);">0,3083</div>
<div class="t" style="left:338.40px;top:386.10px;font-size:10.4px;color:#eaeaea;font-weight:normal;transform-origin:0 0;transform:scaleX(1.0600);">0,3089</div>
<div class="t" style="left:392.50px;top:386.10px;font-size:10.4px;color:#eaeaea;font-weight:normal;transform-origin:0 0;transform:scaleX(1.0600);">0,3091</div>
<div class="t" style="left:446.10px;top:386.10px;font-size:10.4px;color:#eaeaea;font-weight:normal;transform-origin:0 0;transform:scaleX(1.0600);">0,3092</div>
<div class="t" style="left:499.70px;top:386.10px;font-size:10.4px;color:#eaeaea;font-weight:normal;transform-origin:0 0;transform:scaleX(1.0600);">0,3093</div>
<div class="t" style="left:547.00px;top:386.10px;font-size:10.4px;color:#eaeaea;font-weight:normal;transform-origin:0 0;transform:scaleX(1.0600);">0,2994</div>
<div class="t" style="left:588.60px;top:386.10px;font-size:10.4px;color:#eaeaea;font-weight:normal;transform-origin:0 0;transform:scaleX(1.0600);">0,3779</div>
<div class="t" style="left:638.80px;top:386.10px;font-size:10.4px;color:#eaeaea;font-weight:normal;transform-origin:0 0;transform:scaleX(1.0600);">0,3627</div>
<div class="t" style="left:692.80px;top:386.10px;font-size:10.4px;color:#eaeaea;font-weight:normal;transform-origin:0 0;transform:scaleX(1.0600);">0,2608</div>
<div class="t" style="left:740.20px;top:386.10px;font-size:10.4px;color:#eaeaea;font-weight:normal;transform-origin:0 0;transform:scaleX(1.0600);">0,3387</div>
<div class="t" style="left:787.50px;top:386.10px;font-size:10.4px;color:#eaeaea;font-weight:normal;transform-origin:0 0;transform:scaleX(1.0600);">0,2708</div>
<div class="t" style="left:849.60px;top:386.10px;font-size:10.4px;color:#eaeaea;font-weight:normal;transform-origin:0 0;transform:scaleX(1.0600);">0,2755</div>
<div class="t" style="left:916.00px;top:386.10px;font-size:10.4px;color:#eaeaea;font-weight:normal;transform-origin:0 0;transform:scaleX(1.0600);">0,4835</div>
<div class="t" style="left:963.50px;top:386.10px;font-size:10.4px;color:#eaeaea;font-weight:normal;transform-origin:0 0;transform:scaleX(1.0600);">0,2303</div>
<div class="r" style="left:203.0px;top:398.40000000000003px;width:797.0px;height:14.6px;background:#767676"></div>
<div class="r" style="left:193.3px;top:398.40000000000003px;width:9.7px;height:14.6px;background:linear-gradient(90deg,#1c1c1c,#2e2e2e)"></div>
<div class="t" style="left:205.90px;top:400.70px;font-size:10.4px;color:#eaeaea;font-weight:normal;transform-origin:0 0;">y: CIE31</div>
<div class="t" style="left:285.00px;top:400.70px;font-size:10.4px;color:#eaeaea;font-weight:normal;transform-origin:0 0;transform:scaleX(1.0600);">0,3305</div>
<div class="t" style="left:338.40px;top:400.70px;font-size:10.4px;color:#eaeaea;font-weight:normal;transform-origin:0 0;transform:scaleX(1.0600);">0,3312</div>
<div class="t" style="left:392.50px;top:400.70px;font-size:10.4px;color:#eaeaea;font-weight:normal;transform-origin:0 0;transform:scaleX(1.0600);">0,3313</div>
<div class="t" style="left:446.10px;top:400.70px;font-size:10.4px;color:#eaeaea;font-weight:normal;transform-origin:0 0;transform:scaleX(1.0600);">0,3312</div>
<div class="t" style="left:499.70px;top:400.70px;font-size:10.4px;color:#eaeaea;font-weight:normal;transform-origin:0 0;transform:scaleX(1.0600);">0,3310</div>
<div class="t" style="left:547.00px;top:400.70px;font-size:10.4px;color:#eaeaea;font-weight:normal;transform-origin:0 0;transform:scaleX(1.0600);">0,3156</div>
<div class="t" style="left:588.60px;top:400.70px;font-size:10.4px;color:#eaeaea;font-weight:normal;transform-origin:0 0;transform:scaleX(1.0600);">0,3676</div>
<div class="t" style="left:638.80px;top:400.70px;font-size:10.4px;color:#eaeaea;font-weight:normal;transform-origin:0 0;transform:scaleX(1.0600);">0,3583</div>
<div class="t" style="left:692.80px;top:400.70px;font-size:10.4px;color:#eaeaea;font-weight:normal;transform-origin:0 0;transform:scaleX(1.0600);">0,2736</div>
<div class="t" style="left:740.20px;top:400.70px;font-size:10.4px;color:#eaeaea;font-weight:normal;transform-origin:0 0;transform:scaleX(1.0600);">0,4260</div>
<div class="t" style="left:787.50px;top:400.70px;font-size:10.4px;color:#eaeaea;font-weight:normal;transform-origin:0 0;transform:scaleX(1.0600);">0,2566</div>
<div class="t" style="left:849.60px;top:400.70px;font-size:10.4px;color:#eaeaea;font-weight:normal;transform-origin:0 0;transform:scaleX(1.0600);">0,3628</div>
<div class="t" style="left:916.00px;top:400.70px;font-size:10.4px;color:#eaeaea;font-weight:normal;transform-origin:0 0;transform:scaleX(1.0600);">0,4277</div>
<div class="t" style="left:963.50px;top:400.70px;font-size:10.4px;color:#eaeaea;font-weight:normal;transform-origin:0 0;transform:scaleX(1.0600);">0,2039</div>
<div class="r" style="left:203.0px;top:413.0px;width:797.0px;height:14.6px;background:#444444"></div>
<div class="r" style="left:193.3px;top:413.0px;width:9.7px;height:14.6px;background:linear-gradient(90deg,#1c1c1c,#2e2e2e)"></div>
<div class="t" style="left:205.90px;top:415.30px;font-size:10.4px;color:#eaeaea;font-weight:normal;transform-origin:0 0;">Y</div>
<div class="t" style="left:285.00px;top:415.30px;font-size:10.4px;color:#eaeaea;font-weight:normal;transform-origin:0 0;transform:scaleX(1.0600);">269,7785</div>
<div class="t" style="left:338.40px;top:415.30px;font-size:10.4px;color:#eaeaea;font-weight:normal;transform-origin:0 0;transform:scaleX(1.0600);">215,7869</div>
<div class="t" style="left:392.50px;top:415.30px;font-size:10.4px;color:#eaeaea;font-weight:normal;transform-origin:0 0;transform:scaleX(1.0600);">179,1558</div>
<div class="t" style="left:446.10px;top:415.30px;font-size:10.4px;color:#eaeaea;font-weight:normal;transform-origin:0 0;transform:scaleX(1.0600);">139,9296</div>
<div class="t" style="left:499.70px;top:415.30px;font-size:10.4px;color:#eaeaea;font-weight:normal;transform-origin:0 0;transform:scaleX(1.0600);">97,8833</div>
<div class="t" style="left:547.00px;top:415.30px;font-size:10.4px;color:#eaeaea;font-weight:normal;transform-origin:0 0;transform:scaleX(1.0600);">1,1601</div>
<div class="t" style="left:588.60px;top:415.30px;font-size:10.4px;color:#eaeaea;font-weight:normal;transform-origin:0 0;transform:scaleX(1.0600);">32,6715</div>
<div class="t" style="left:638.80px;top:415.30px;font-size:10.4px;color:#eaeaea;font-weight:normal;transform-origin:0 0;transform:scaleX(1.0600);">97,9279</div>
<div class="t" style="left:692.80px;top:415.30px;font-size:10.4px;color:#eaeaea;font-weight:normal;transform-origin:0 0;transform:scaleX(1.0600);">58,5511</div>
<div class="t" style="left:740.20px;top:415.30px;font-size:10.4px;color:#eaeaea;font-weight:normal;transform-origin:0 0;transform:scaleX(1.0600);">43,5155</div>
<div class="t" style="left:787.50px;top:415.30px;font-size:10.4px;color:#eaeaea;font-weight:normal;transform-origin:0 0;transform:scaleX(1.0600);">69,4886</div>
<div class="t" style="left:849.60px;top:415.30px;font-size:10.4px;color:#eaeaea;font-weight:normal;transform-origin:0 0;transform:scaleX(1.0600);">123,6750</div>
<div class="t" style="left:916.00px;top:415.30px;font-size:10.4px;color:#eaeaea;font-weight:normal;transform-origin:0 0;transform:scaleX(1.0600);">77,9342</div>
<div class="t" style="left:963.50px;top:415.30px;font-size:10.4px;color:#eaeaea;font-weight:normal;transform-origin:0 0;transform:scaleX(1.0600);">38,1519</div>
<div class="r" style="left:203.0px;top:427.6px;width:797.0px;height:14.6px;background:#767676"></div>
<div class="r" style="left:193.3px;top:427.6px;width:9.7px;height:14.6px;background:linear-gradient(90deg,#1c1c1c,#2e2e2e)"></div>
<div class="t" style="left:205.90px;top:429.90px;font-size:10.4px;color:#eaeaea;font-weight:normal;transform-origin:0 0;">Target x:CIE31</div>
<div class="t" style="left:285.00px;top:429.90px;font-size:10.4px;color:#eaeaea;font-weight:normal;transform-origin:0 0;transform:scaleX(1.0600);">0,3127</div>
<div class="t" style="left:338.40px;top:429.90px;font-size:10.4px;color:#eaeaea;font-weight:normal;transform-origin:0 0;transform:scaleX(1.0600);">0,3127</div>
<div class="t" style="left:392.50px;top:429.90px;font-size:10.4px;color:#eaeaea;font-weight:normal;transform-origin:0 0;transform:scaleX(1.0600);">0,3127</div>
<div class="t" style="left:446.10px;top:429.90px;font-size:10.4px;color:#eaeaea;font-weight:normal;transform-origin:0 0;transform:scaleX(1.0600);">0,3127</div>
<div class="t" style="left:499.70px;top:429.90px;font-size:10.4px;color:#eaeaea;font-weight:normal;transform-origin:0 0;transform:scaleX(1.0600);">0,3127</div>
<div class="t" style="left:547.00px;top:429.90px;font-size:10.4px;color:#eaeaea;font-weight:normal;transform-origin:0 0;transform:scaleX(1.0600);">0,3127</div>
<div class="t" style="left:588.60px;top:429.90px;font-size:10.4px;color:#eaeaea;font-weight:normal;transform-origin:0 0;transform:scaleX(1.0600);">0,3914</div>
<div class="t" style="left:638.80px;top:429.90px;font-size:10.4px;color:#eaeaea;font-weight:normal;transform-origin:0 0;transform:scaleX(1.0600);">0,3733</div>
<div class="t" style="left:692.80px;top:429.90px;font-size:10.4px;color:#eaeaea;font-weight:normal;transform-origin:0 0;transform:scaleX(1.0600);">0,2543</div>
<div class="t" style="left:740.20px;top:429.90px;font-size:10.4px;color:#eaeaea;font-weight:normal;transform-origin:0 0;transform:scaleX(1.0600);">0,3381</div>
<div class="t" style="left:787.50px;top:429.90px;font-size:10.4px;color:#eaeaea;font-weight:normal;transform-origin:0 0;transform:scaleX(1.0600);">0,2719</div>
<div class="t" style="left:849.60px;top:429.90px;font-size:10.4px;color:#eaeaea;font-weight:normal;transform-origin:0 0;transform:scaleX(1.0600);">0,2642</div>
<div class="t" style="left:916.00px;top:429.90px;font-size:10.4px;color:#eaeaea;font-weight:normal;transform-origin:0 0;transform:scaleX(1.0600);">0,5010</div>
<div class="t" style="left:963.50px;top:429.90px;font-size:10.4px;color:#eaeaea;font-weight:normal;transform-origin:0 0;transform:scaleX(1.0600);">0,2235</div>
<div class="r" style="left:203.0px;top:442.2px;width:797.0px;height:14.6px;background:#444444"></div>
<div class="r" style="left:193.3px;top:442.2px;width:9.7px;height:14.6px;background:linear-gradient(90deg,#1c1c1c,#2e2e2e)"></div>
<div class="t" style="left:205.90px;top:444.50px;font-size:10.4px;color:#eaeaea;font-weight:normal;transform-origin:0 0;">Target y:CIE31</div>
<div class="t" style="left:285.00px;top:444.50px;font-size:10.4px;color:#eaeaea;font-weight:normal;transform-origin:0 0;transform:scaleX(1.0600);">0,3290</div>
<div class="t" style="left:338.40px;top:444.50px;font-size:10.4px;color:#eaeaea;font-weight:normal;transform-origin:0 0;transform:scaleX(1.0600);">0,3290</div>
<div class="t" style="left:392.50px;top:444.50px;font-size:10.4px;color:#eaeaea;font-weight:normal;transform-origin:0 0;transform:scaleX(1.0600);">0,3290</div>
<div class="t" style="left:446.10px;top:444.50px;font-size:10.4px;color:#eaeaea;font-weight:normal;transform-origin:0 0;transform:scaleX(1.0600);">0,3290</div>
<div class="t" style="left:499.70px;top:444.50px;font-size:10.4px;color:#eaeaea;font-weight:normal;transform-origin:0 0;transform:scaleX(1.0600);">0,3290</div>
<div class="t" style="left:547.00px;top:444.50px;font-size:10.4px;color:#eaeaea;font-weight:normal;transform-origin:0 0;transform:scaleX(1.0600);">0,3290</div>
<div class="t" style="left:588.60px;top:444.50px;font-size:10.4px;color:#eaeaea;font-weight:normal;transform-origin:0 0;transform:scaleX(1.0600);">0,3599</div>
<div class="t" style="left:638.80px;top:444.50px;font-size:10.4px;color:#eaeaea;font-weight:normal;transform-origin:0 0;transform:scaleX(1.0600);">0,3543</div>
<div class="t" style="left:692.80px;top:444.50px;font-size:10.4px;color:#eaeaea;font-weight:normal;transform-origin:0 0;transform:scaleX(1.0600);">0,2712</div>
<div class="t" style="left:740.20px;top:444.50px;font-size:10.4px;color:#eaeaea;font-weight:normal;transform-origin:0 0;transform:scaleX(1.0600);">0,4175</div>
<div class="t" style="left:787.50px;top:444.50px;font-size:10.4px;color:#eaeaea;font-weight:normal;transform-origin:0 0;transform:scaleX(1.0600);">0,2585</div>
<div class="t" style="left:849.60px;top:444.50px;font-size:10.4px;color:#eaeaea;font-weight:normal;transform-origin:0 0;transform:scaleX(1.0600);">0,3575</div>
<div class="t" style="left:916.00px;top:444.50px;font-size:10.4px;color:#eaeaea;font-weight:normal;transform-origin:0 0;transform:scaleX(1.0600);">0,4077</div>
<div class="t" style="left:963.50px;top:444.50px;font-size:10.4px;color:#eaeaea;font-weight:normal;transform-origin:0 0;transform:scaleX(1.0600);">0,2024</div>
<div class="r" style="left:203.0px;top:456.8px;width:797.0px;height:14.6px;background:#767676"></div>
<div class="r" style="left:193.3px;top:456.8px;width:9.7px;height:14.6px;background:linear-gradient(90deg,#1c1c1c,#2e2e2e)"></div>
<div class="t" style="left:205.90px;top:459.10px;font-size:10.4px;color:#eaeaea;font-weight:normal;transform-origin:0 0;">Target Y</div>
<div class="t" style="left:285.00px;top:459.10px;font-size:10.4px;color:#eaeaea;font-weight:normal;transform-origin:0 0;transform:scaleX(1.0600);">269,7785</div>
<div class="t" style="left:338.40px;top:459.10px;font-size:10.4px;color:#eaeaea;font-weight:normal;transform-origin:0 0;transform:scaleX(1.0600);">215,0858</div>
<div class="t" style="left:392.50px;top:459.10px;font-size:10.4px;color:#eaeaea;font-weight:normal;transform-origin:0 0;transform:scaleX(1.0600);">177,6884</div>
<div class="t" style="left:446.10px;top:459.10px;font-size:10.4px;color:#eaeaea;font-weight:normal;transform-origin:0 0;transform:scaleX(1.0600);">138,9256</div>
<div class="t" style="left:499.70px;top:459.10px;font-size:10.4px;color:#eaeaea;font-weight:normal;transform-origin:0 0;transform:scaleX(1.0600);">99,5717</div>
<div class="t" style="left:547.00px;top:459.10px;font-size:10.4px;color:#eaeaea;font-weight:normal;transform-origin:0 0;transform:scaleX(1.0600);">1,1601</div>
<div class="t" style="left:588.60px;top:459.10px;font-size:10.4px;color:#eaeaea;font-weight:normal;transform-origin:0 0;transform:scaleX(1.0600);">32,8760</div>
<div class="t" style="left:638.80px;top:459.10px;font-size:10.4px;color:#eaeaea;font-weight:normal;transform-origin:0 0;transform:scaleX(1.0600);">100,7877</div>
<div class="t" style="left:692.80px;top:459.10px;font-size:10.4px;color:#eaeaea;font-weight:normal;transform-origin:0 0;transform:scaleX(1.0600);">57,4079</div>
<div class="t" style="left:740.20px;top:459.10px;font-size:10.4px;color:#eaeaea;font-weight:normal;transform-origin:0 0;transform:scaleX(1.0600);">41,6607</div>
<div class="t" style="left:787.50px;top:459.10px;font-size:10.4px;color:#eaeaea;font-weight:normal;transform-origin:0 0;transform:scaleX(1.0600);">69,9708</div>
<div class="t" style="left:849.60px;top:459.10px;font-size:10.4px;color:#eaeaea;font-weight:normal;transform-origin:0 0;transform:scaleX(1.0600);">118,6369</div>
<div class="t" style="left:916.00px;top:459.10px;font-size:10.4px;color:#eaeaea;font-weight:normal;transform-origin:0 0;transform:scaleX(1.0600);">82,2672</div>
<div class="t" style="left:963.50px;top:459.10px;font-size:10.4px;color:#eaeaea;font-weight:normal;transform-origin:0 0;transform:scaleX(1.0600);">37,7331</div>
<div class="r" style="left:203.0px;top:471.4px;width:797.0px;height:14.6px;background:#444444"></div>
<div class="r" style="left:193.3px;top:471.4px;width:9.7px;height:14.6px;background:linear-gradient(90deg,#1c1c1c,#2e2e2e)"></div>
<div class="t" style="left:205.90px;top:473.70px;font-size:10.4px;color:#eaeaea;font-weight:normal;transform-origin:0 0;">ΔE 2000</div>
<div class="t" style="left:285.00px;top:473.70px;font-size:10.4px;color:#eaeaea;font-weight:normal;transform-origin:0 0;transform:scaleX(1.0600);">4,2701</div>
<div class="t" style="left:338.40px;top:473.70px;font-size:10.4px;color:#eaeaea;font-weight:normal;transform-origin:0 0;transform:scaleX(1.0600);">3,9719</div>
<div class="t" style="left:392.50px;top:473.70px;font-size:10.4px;color:#eaeaea;font-weight:normal;transform-origin:0 0;transform:scaleX(1.0600);">3,7146</div>
<div class="t" style="left:446.10px;top:473.70px;font-size:10.4px;color:#eaeaea;font-weight:normal;transform-origin:0 0;transform:scaleX(1.0600);">3,3411</div>
<div class="t" style="left:499.70px;top:473.70px;font-size:10.4px;color:#eaeaea;font-weight:normal;transform-origin:0 0;transform:scaleX(1.0600);">2,8701</div>
<div class="t" style="left:547.00px;top:473.70px;font-size:10.4px;color:#eaeaea;font-weight:normal;transform-origin:0 0;transform:scaleX(1.0600);">0,7908</div>
<div class="t" style="left:588.60px;top:473.70px;font-size:10.4px;color:#eaeaea;font-weight:normal;transform-origin:0 0;transform:scaleX(1.0600);">4,8429</div>
<div class="t" style="left:638.80px;top:473.70px;font-size:10.4px;color:#eaeaea;font-weight:normal;transform-origin:0 0;transform:scaleX(1.0600);">4,6377</div>
<div class="t" style="left:692.80px;top:473.70px;font-size:10.4px;color:#eaeaea;font-weight:normal;transform-origin:0 0;transform:scaleX(1.0600);">2,0057</div>
<div class="t" style="left:740.20px;top:473.70px;font-size:10.4px;color:#eaeaea;font-weight:normal;transform-origin:0 0;transform:scaleX(1.0600);">1,5629</div>
<div class="t" style="left:787.50px;top:473.70px;font-size:10.4px;color:#eaeaea;font-weight:normal;transform-origin:0 0;transform:scaleX(1.0600);">0,3609</div>
<div class="t" style="left:849.60px;top:473.70px;font-size:10.4px;color:#eaeaea;font-weight:normal;transform-origin:0 0;transform:scaleX(1.0600);">2,6360</div>
<div class="t" style="left:916.00px;top:473.70px;font-size:10.4px;color:#eaeaea;font-weight:normal;transform-origin:0 0;transform:scaleX(1.0600);">6,5695</div>
<div class="t" style="left:963.50px;top:473.70px;font-size:10.4px;color:#eaeaea;font-weight:normal;transform-origin:0 0;transform:scaleX(1.0600);">1,9256</div>
<div class="r" style="left:193.3px;top:486.0px;width:806.7px;height:9px;background:#2c2c2c"></div>
<div class="r" style="left:203.5px;top:486.5px;width:794.5px;height:8.5px;background:#4c4c4c"></div>
<div class="r" style="left:215px;top:487px;width:237px;height:7.5px;background:#3c3c3c;border-radius:4px"></div>
<div class="r" style="left:203.5px;top:486.5px;width:10.5px;height:8.5px;background:#8c8c8c;border-radius:1px"></div>
<div class="r" style="left:206.5px;top:488px;width:0;height:0;border-top:2.8px solid transparent;border-bottom:2.8px solid transparent;border-right:3.5px solid #3a3a3a"></div>
<div class="r" style="left:988px;top:486.5px;width:10px;height:8.5px;background:#8c8c8c;border-radius:1px"></div>
<div class="r" style="left:991.5px;top:488px;width:0;height:0;border-top:2.8px solid transparent;border-bottom:2.8px solid transparent;border-left:3.5px solid #3a3a3a"></div>
<div class="r" style="left:997.5px;top:368.2px;width:2.5px;height:126.80000000000001px;background:#2a2a2a"></div>
<div class="r" style="left:0px;top:494.5px;width:1000px;height:34px;background:#2e2e2e"></div>
<div class="r" style="left:0px;top:525px;width:832px;height:3px;background:#262626"></div>
<div class="r" style="left:2px;top:525px;width:4px;height:3px;background:#888"></div>
<div class="r" style="left:1.00px;top:498.4px;width:25.6px;height:26px;border-radius:2px;background:linear-gradient(#a8a8a8,#8c8c8c 50%,#666);box-shadow:inset 0 0 0 1px #a0a0a0, 0 0 0 0.5px #222"></div>
<div class="r" style="left:4.00px;top:501.3px;width:19.6px;height:12.5px;border-radius:1.5px;background:#ffffff;box-shadow:0 0 0 0.6px #505050"></div>
<div class="t" style="left:-6.20px;width:40px;text-align:center;top:516.25px;font-size:6.2px;color:#1a1a1a;font-weight:normal;transform-origin:50% 0;transform:scaleX(0.9500);">White</div>
<div class="r" style="left:28.10px;top:498.4px;width:25.6px;height:26px;border-radius:2px;background:linear-gradient(#a8a8a8,#8c8c8c 50%,#666);box-shadow:inset 0 0 0 1px #a0a0a0, 0 0 0 0.5px #222"></div>
<div class="r" style="left:31.10px;top:501.3px;width:19.6px;height:12.5px;border-radius:1.5px;background:#e8e8e8;box-shadow:0 0 0 0.6px #505050"></div>
<div class="t" style="left:20.90px;width:40px;text-align:center;top:516.25px;font-size:6.2px;color:#1a1a1a;font-weight:normal;transform-origin:50% 0;transform:scaleX(0.9500);">Gray 80</div>
<div class="r" style="left:55.20px;top:498.4px;width:25.6px;height:26px;border-radius:2px;background:linear-gradient(#a8a8a8,#8c8c8c 50%,#666);box-shadow:inset 0 0 0 1px #a0a0a0, 0 0 0 0.5px #222"></div>
<div class="r" style="left:58.20px;top:501.3px;width:19.6px;height:12.5px;border-radius:1.5px;background:#d8d8d8;box-shadow:0 0 0 0.6px #505050"></div>
<div class="t" style="left:48.00px;width:40px;text-align:center;top:516.25px;font-size:6.2px;color:#1a1a1a;font-weight:normal;transform-origin:50% 0;transform:scaleX(0.9500);">Gray 65</div>
<div class="r" style="left:82.30px;top:498.4px;width:25.6px;height:26px;border-radius:2px;background:linear-gradient(#a8a8a8,#8c8c8c 50%,#666);box-shadow:inset 0 0 0 1px #a0a0a0, 0 0 0 0.5px #222"></div>
<div class="r" style="left:85.30px;top:501.3px;width:19.6px;height:12.5px;border-radius:1.5px;background:#c6c6c6;box-shadow:0 0 0 0.6px #505050"></div>
<div class="t" style="left:75.10px;width:40px;text-align:center;top:516.25px;font-size:6.2px;color:#1a1a1a;font-weight:normal;transform-origin:50% 0;transform:scaleX(0.9500);">Gray 50</div>
<div class="r" style="left:109.40px;top:498.4px;width:25.6px;height:26px;border-radius:2px;background:linear-gradient(#a8a8a8,#8c8c8c 50%,#666);box-shadow:inset 0 0 0 1px #a0a0a0, 0 0 0 0.5px #222"></div>
<div class="r" style="left:112.40px;top:501.3px;width:19.6px;height:12.5px;border-radius:1.5px;background:#a6a6a6;box-shadow:0 0 0 0.6px #505050"></div>
<div class="t" style="left:102.20px;width:40px;text-align:center;top:516.25px;font-size:6.2px;color:#1a1a1a;font-weight:normal;transform-origin:50% 0;transform:scaleX(0.9500);">Gray 35</div>
<div class="r" style="left:136.50px;top:498.4px;width:25.6px;height:26px;border-radius:2px;background:linear-gradient(#a8a8a8,#8c8c8c 50%,#666);box-shadow:inset 0 0 0 1px #a0a0a0, 0 0 0 0.5px #222"></div>
<div class="r" style="left:139.50px;top:501.3px;width:19.6px;height:12.5px;border-radius:1.5px;background:#040404;box-shadow:0 0 0 0.6px #505050"></div>
<div class="t" style="left:129.30px;width:40px;text-align:center;top:516.25px;font-size:6.2px;color:#1a1a1a;font-weight:normal;transform-origin:50% 0;transform:scaleX(0.9500);">Black</div>
<div class="r" style="left:163.60px;top:498.4px;width:25.6px;height:26px;border-radius:2px;background:linear-gradient(#a8a8a8,#8c8c8c 50%,#666);box-shadow:inset 0 0 0 1px #a0a0a0, 0 0 0 0.5px #222"></div>
<div class="r" style="left:166.60px;top:501.3px;width:19.6px;height:12.5px;border-radius:1.5px;background:#7c5444;box-shadow:0 0 0 0.6px #505050"></div>
<div class="t" style="left:156.40px;width:40px;text-align:center;top:516.25px;font-size:6.2px;color:#1a1a1a;font-weight:normal;transform-origin:50% 0;transform:scaleX(0.9500);">Dark Skin</div>
<div class="r" style="left:190.70px;top:498.4px;width:25.6px;height:26px;border-radius:2px;background:linear-gradient(#a8a8a8,#8c8c8c 50%,#666);box-shadow:inset 0 0 0 1px #a0a0a0, 0 0 0 0.5px #222"></div>
<div class="r" style="left:193.70px;top:501.3px;width:19.6px;height:12.5px;border-radius:1.5px;background:#d8a48c;box-shadow:0 0 0 0.6px #505050"></div>
<div class="t" style="left:183.50px;width:40px;text-align:center;top:516.25px;font-size:6.2px;color:#1a1a1a;font-weight:normal;transform-origin:50% 0;transform:scaleX(0.9500);">Light Skin</div>
<div class="r" style="left:217.80px;top:498.4px;width:25.6px;height:26px;border-radius:2px;background:linear-gradient(#a8a8a8,#8c8c8c 50%,#666);box-shadow:inset 0 0 0 1px #a0a0a0, 0 0 0 0.5px #222"></div>
<div class="r" style="left:220.80px;top:501.3px;width:19.6px;height:12.5px;border-radius:1.5px;background:#5c84c0;box-shadow:0 0 0 0.6px #505050"></div>
<div class="t" style="left:210.60px;width:40px;text-align:center;top:516.25px;font-size:6.2px;color:#1a1a1a;font-weight:normal;transform-origin:50% 0;transform:scaleX(0.9500);">Blue Sky</div>
<div class="r" style="left:244.90px;top:498.4px;width:25.6px;height:26px;border-radius:2px;background:linear-gradient(#a8a8a8,#8c8c8c 50%,#666);box-shadow:inset 0 0 0 1px #a0a0a0, 0 0 0 0.5px #222"></div>
<div class="r" style="left:247.90px;top:501.3px;width:19.6px;height:12.5px;border-radius:1.5px;background:#5a7a40;box-shadow:0 0 0 0.6px #505050"></div>
<div class="t" style="left:237.70px;width:40px;text-align:center;top:516.25px;font-size:6.2px;color:#1a1a1a;font-weight:normal;transform-origin:50% 0;transform:scaleX(0.9500);">Foliage</div>
<div class="r" style="left:272.00px;top:498.4px;width:25.6px;height:26px;border-radius:2px;background:linear-gradient(#a8a8a8,#8c8c8c 50%,#666);box-shadow:inset 0 0 0 1px #a0a0a0, 0 0 0 0.5px #222"></div>
<div class="r" style="left:275.00px;top:501.3px;width:19.6px;height:5.5px;border-radius:1.5px;background:#8a7ccc;box-shadow:0 0 0 0.6px #505050"></div>
<div class="t" style="left:264.00px;width:41.6px;text-align:center;top:511.20px;font-size:6.2px;line-height:6px;color:#1a1a1a;font-weight:normal"><span style="display:inline-block;text-align:left;transform:scaleX(0.92)">Blue<br>Flower</span></div>
<div class="r" style="left:299.10px;top:498.4px;width:25.6px;height:26px;border-radius:2px;background:linear-gradient(#a8a8a8,#8c8c8c 50%,#666);box-shadow:inset 0 0 0 1px #a0a0a0, 0 0 0 0.5px #222"></div>
<div class="r" style="left:302.10px;top:501.3px;width:19.6px;height:5.5px;border-radius:1.5px;background:#58c8b0;box-shadow:0 0 0 0.6px #505050"></div>
<div class="t" style="left:291.10px;width:41.6px;text-align:center;top:511.20px;font-size:6.2px;line-height:6px;color:#1a1a1a;font-weight:normal"><span style="display:inline-block;text-align:left;transform:scaleX(0.92)">Bluish<br>Green</span></div>
<div class="r" style="left:326.20px;top:498.4px;width:25.6px;height:26px;border-radius:2px;background:linear-gradient(#a8a8a8,#8c8c8c 50%,#666);box-shadow:inset 0 0 0 1px #a0a0a0, 0 0 0 0.5px #222"></div>
<div class="r" style="left:329.20px;top:501.3px;width:19.6px;height:12.5px;border-radius:1.5px;background:#e88020;box-shadow:0 0 0 0.6px #505050"></div>
<div class="t" style="left:319.00px;width:40px;text-align:center;top:516.25px;font-size:6.2px;color:#1a1a1a;font-weight:normal;transform-origin:50% 0;transform:scaleX(0.9500);">Orange</div>
<div class="r" style="left:353.30px;top:498.4px;width:25.6px;height:26px;border-radius:2px;background:linear-gradient(#a8a8a8,#8c8c8c 50%,#666);box-shadow:inset 0 0 0 1px #a0a0a0, 0 0 0 0.5px #222"></div>
<div class="r" style="left:356.30px;top:501.3px;width:19.6px;height:5.5px;border-radius:1.5px;background:#4054b8;box-shadow:0 0 0 0.6px #505050"></div>
<div class="t" style="left:345.30px;width:41.6px;text-align:center;top:511.20px;font-size:6.2px;line-height:6px;color:#1a1a1a;font-weight:normal"><span style="display:inline-block;text-align:left;transform:scaleX(0.92)">Purplish<br>Blue</span></div>
<div class="r" style="left:380.40px;top:498.4px;width:25.6px;height:26px;border-radius:2px;background:linear-gradient(#a8a8a8,#8c8c8c 50%,#666);box-shadow:inset 0 0 0 1px #a0a0a0, 0 0 0 0.5px #222"></div>
<div class="r" style="left:383.40px;top:501.3px;width:19.6px;height:5.5px;border-radius:1.5px;background:#d04c5c;box-shadow:0 0 0 0.6px #505050"></div>
<div class="t" style="left:372.40px;width:41.6px;text-align:center;top:511.20px;font-size:6.2px;line-height:6px;color:#1a1a1a;font-weight:normal"><span style="display:inline-block;text-align:left;transform:scaleX(0.92)">Moderate<br>Red</span></div>
<div class="r" style="left:407.50px;top:498.4px;width:25.6px;height:26px;border-radius:2px;background:linear-gradient(#a8a8a8,#8c8c8c 50%,#666);box-shadow:inset 0 0 0 1px #a0a0a0, 0 0 0 0.5px #222"></div>
<div class="r" style="left:410.50px;top:501.3px;width:19.6px;height:12.5px;border-radius:1.5px;background:#5c3478;box-shadow:0 0 0 0.6px #505050"></div>
<div class="t" style="left:400.30px;width:40px;text-align:center;top:516.25px;font-size:6.2px;color:#1a1a1a;font-weight:normal;transform-origin:50% 0;transform:scaleX(0.9500);">Purple</div>
<div class="r" style="left:434.60px;top:498.4px;width:25.6px;height:26px;border-radius:2px;background:linear-gradient(#a8a8a8,#8c8c8c 50%,#666);box-shadow:inset 0 0 0 1px #a0a0a0, 0 0 0 0.5px #222"></div>
<div class="r" style="left:437.60px;top:501.3px;width:19.6px;height:5.5px;border-radius:1.5px;background:#a8c83c;box-shadow:0 0 0 0.6px #505050"></div>
<div class="t" style="left:426.60px;width:41.6px;text-align:center;top:511.20px;font-size:6.2px;line-height:6px;color:#1a1a1a;font-weight:normal"><span style="display:inline-block;text-align:left;transform:scaleX(0.92)">Yellow<br>Green</span></div>
<div class="r" style="left:461.70px;top:498.4px;width:25.6px;height:26px;border-radius:2px;background:linear-gradient(#a8a8a8,#8c8c8c 50%,#666);box-shadow:inset 0 0 0 1px #a0a0a0, 0 0 0 0.5px #222"></div>
<div class="r" style="left:464.70px;top:501.3px;width:19.6px;height:5.5px;border-radius:1.5px;background:#eca828;box-shadow:0 0 0 0.6px #505050"></div>
<div class="t" style="left:453.70px;width:41.6px;text-align:center;top:511.20px;font-size:6.2px;line-height:6px;color:#1a1a1a;font-weight:normal"><span style="display:inline-block;text-align:left;transform:scaleX(0.92)">Orange<br>Yellow</span></div>
<div class="r" style="left:488.80px;top:498.4px;width:25.6px;height:26px;border-radius:2px;background:linear-gradient(#a8a8a8,#8c8c8c 50%,#666);box-shadow:inset 0 0 0 1px #a0a0a0, 0 0 0 0.5px #222"></div>
<div class="r" style="left:491.80px;top:501.3px;width:19.6px;height:12.5px;border-radius:1.5px;background:#2434a8;box-shadow:0 0 0 0.6px #505050"></div>
<div class="t" style="left:481.60px;width:40px;text-align:center;top:516.25px;font-size:6.2px;color:#1a1a1a;font-weight:normal;transform-origin:50% 0;transform:scaleX(0.9500);">Blue</div>
<div class="r" style="left:515.90px;top:498.4px;width:25.6px;height:26px;border-radius:2px;background:linear-gradient(#a8a8a8,#8c8c8c 50%,#666);box-shadow:inset 0 0 0 1px #a0a0a0, 0 0 0 0.5px #222"></div>
<div class="r" style="left:518.90px;top:501.3px;width:19.6px;height:12.5px;border-radius:1.5px;background:#40a848;box-shadow:0 0 0 0.6px #505050"></div>
<div class="t" style="left:508.70px;width:40px;text-align:center;top:516.25px;font-size:6.2px;color:#1a1a1a;font-weight:normal;transform-origin:50% 0;transform:scaleX(0.9500);">Green</div>
<div class="r" style="left:543.00px;top:498.4px;width:25.6px;height:26px;border-radius:2px;background:linear-gradient(#a8a8a8,#8c8c8c 50%,#666);box-shadow:inset 0 0 0 1px #a0a0a0, 0 0 0 0.5px #222"></div>
<div class="r" style="left:546.00px;top:501.3px;width:19.6px;height:12.5px;border-radius:1.5px;background:#b82c30;box-shadow:0 0 0 0.6px #505050"></div>
<div class="t" style="left:535.80px;width:40px;text-align:center;top:516.25px;font-size:6.2px;color:#1a1a1a;font-weight:normal;transform-origin:50% 0;transform:scaleX(0.9500);">Red</div>
<div class="r" style="left:570.10px;top:498.4px;width:25.6px;height:26px;border-radius:2px;background:linear-gradient(#a8a8a8,#8c8c8c 50%,#666);box-shadow:inset 0 0 0 1px #a0a0a0, 0 0 0 0.5px #222"></div>
<div class="r" style="left:573.10px;top:501.3px;width:19.6px;height:12.5px;border-radius:1.5px;background:#ecc424;box-shadow:0 0 0 0.6px #505050"></div>
<div class="t" style="left:562.90px;width:40px;text-align:center;top:516.25px;font-size:6.2px;color:#1a1a1a;font-weight:normal;transform-origin:50% 0;transform:scaleX(0.9500);">Yellow</div>
<div class="r" style="left:597.20px;top:498.4px;width:25.6px;height:26px;border-radius:2px;background:linear-gradient(#a8a8a8,#8c8c8c 50%,#666);box-shadow:inset 0 0 0 1px #a0a0a0, 0 0 0 0.5px #222"></div>
<div class="r" style="left:600.20px;top:501.3px;width:19.6px;height:12.5px;border-radius:1.5px;background:#c45ca8;box-shadow:0 0 0 0.6px #505050"></div>
<div class="t" style="left:590.00px;width:40px;text-align:center;top:516.25px;font-size:6.2px;color:#1a1a1a;font-weight:normal;transform-origin:50% 0;transform:scaleX(0.9500);">Magenta</div>
<div class="r" style="left:624.30px;top:498.4px;width:25.6px;height:26px;border-radius:2px;background:linear-gradient(#a8a8a8,#8c8c8c 50%,#666);box-shadow:inset 0 0 0 1px #a0a0a0, 0 0 0 0.5px #222"></div>
<div class="r" style="left:627.30px;top:501.3px;width:19.6px;height:12.5px;border-radius:1.5px;background:#1888b8;box-shadow:0 0 0 0.6px #505050"></div>
<div class="t" style="left:617.10px;width:40px;text-align:center;top:516.25px;font-size:6.2px;color:#1a1a1a;font-weight:normal;transform-origin:50% 0;transform:scaleX(0.9500);">Cyan</div>
<div class="r" style="left:651.40px;top:498.4px;width:25.6px;height:26px;border-radius:2px;background:linear-gradient(#a8a8a8,#8c8c8c 50%,#666);box-shadow:inset 0 0 0 1px #a0a0a0, 0 0 0 0.5px #222"></div>
<div class="r" style="left:654.40px;top:501.3px;width:19.6px;height:12.5px;border-radius:1.5px;background:#ff0000;box-shadow:0 0 0 0.6px #505050"></div>
<div class="t" style="left:644.20px;width:40px;text-align:center;top:516.25px;font-size:6.2px;color:#1a1a1a;font-weight:normal;transform-origin:50% 0;transform:scaleX(0.9500);">100% Red</div>
<div class="r" style="left:678.50px;top:498.4px;width:25.6px;height:26px;border-radius:2px;background:linear-gradient(#a8a8a8,#8c8c8c 50%,#666);box-shadow:inset 0 0 0 1px #a0a0a0, 0 0 0 0.5px #222"></div>
<div class="r" style="left:681.50px;top:501.3px;width:19.6px;height:5.5px;border-radius:1.5px;background:#00ff00;box-shadow:0 0 0 0.6px #505050"></div>
<div class="t" style="left:670.50px;width:41.6px;text-align:center;top:511.20px;font-size:6.2px;line-height:6px;color:#1a1a1a;font-weight:normal"><span style="display:inline-block;text-align:left;transform:scaleX(0.92)">100%<br>Green</span></div>
<div class="r" style="left:705.60px;top:498.4px;width:25.6px;height:26px;border-radius:2px;background:linear-gradient(#a8a8a8,#8c8c8c 50%,#666);box-shadow:inset 0 0 0 1px #a0a0a0, 0 0 0 0.5px #222"></div>
<div class="r" style="left:708.60px;top:501.3px;width:19.6px;height:5.5px;border-radius:1.5px;background:#0000ff;box-shadow:0 0 0 0.6px #505050"></div>
<div class="t" style="left:697.60px;width:41.6px;text-align:center;top:511.20px;font-size:6.2px;line-height:6px;color:#1a1a1a;font-weight:normal"><span style="display:inline-block;text-align:left;transform:scaleX(0.92)">100%<br>Blue</span></div>
<div class="r" style="left:732.70px;top:498.4px;width:25.6px;height:26px;border-radius:2px;background:linear-gradient(#a8a8a8,#8c8c8c 50%,#666);box-shadow:inset 0 0 0 1px #a0a0a0, 0 0 0 0.5px #222"></div>
<div class="r" style="left:735.70px;top:501.3px;width:19.6px;height:5.5px;border-radius:1.5px;background:#00ffff;box-shadow:0 0 0 0.6px #505050"></div>
<div class="t" style="left:724.70px;width:41.6px;text-align:center;top:511.20px;font-size:6.2px;line-height:6px;color:#1a1a1a;font-weight:normal"><span style="display:inline-block;text-align:left;transform:scaleX(0.92)">100%<br>Cyan</span></div>
<div class="r" style="left:759.80px;top:498.4px;width:25.6px;height:26px;border-radius:2px;background:linear-gradient(#a8a8a8,#8c8c8c 50%,#666);box-shadow:inset 0 0 0 1px #a0a0a0, 0 0 0 0.5px #222"></div>
<div class="r" style="left:762.80px;top:501.3px;width:19.6px;height:5.5px;border-radius:1.5px;background:#ff00ff;box-shadow:0 0 0 0.6px #505050"></div>
<div class="t" style="left:751.80px;width:41.6px;text-align:center;top:511.20px;font-size:6.2px;line-height:6px;color:#1a1a1a;font-weight:normal"><span style="display:inline-block;text-align:left;transform:scaleX(0.92)">100%<br>Magenta</span></div>
<div class="r" style="left:786.90px;top:498.4px;width:25.6px;height:26px;border-radius:2px;background:linear-gradient(#a8a8a8,#8c8c8c 50%,#666);box-shadow:inset 0 0 0 1px #a0a0a0, 0 0 0 0.5px #222"></div>
<div class="r" style="left:789.90px;top:501.3px;width:19.6px;height:5.5px;border-radius:1.5px;background:#ffff00;box-shadow:0 0 0 0.6px #505050"></div>
<div class="t" style="left:778.90px;width:41.6px;text-align:center;top:511.20px;font-size:6.2px;line-height:6px;color:#1a1a1a;font-weight:normal"><span style="display:inline-block;text-align:left;transform:scaleX(0.92)">100%<br>Yellow</span></div>
<div class="r" style="left:814.00px;top:498.4px;width:25.6px;height:26px;border-radius:2px;background:linear-gradient(#a8a8a8,#8c8c8c 50%,#666);box-shadow:inset 0 0 0 1px #a0a0a0, 0 0 0 0.5px #222"></div>
<div class="r" style="left:817.00px;top:501.3px;width:19.6px;height:12.5px;border-radius:1.5px;background:#8a4c24;box-shadow:0 0 0 0.6px #505050"></div>
<div class="t" style="left:806.80px;width:40px;text-align:center;top:516.25px;font-size:6.2px;color:#1a1a1a;font-weight:normal;transform-origin:50% 0;transform:scaleX(0.9500);">2E</div>
<div class="r" style="left:832px;top:496px;width:168px;height:32px;background:#2a2a2a"></div>
<div class="r" style="left:832px;top:498px;width:24px;height:9.5px;background:linear-gradient(#b4b4b4,#9a9a9a);border-radius:2px 2px 0 0"></div>
<div class="r" style="left:840px;top:499.5px;width:8px;height:6px;border-radius:50%;background:#8e8e8e"></div>
<div class="r" style="left:841.5px;top:500.5px;width:0;height:0;border-left:2.5px solid transparent;border-right:2.5px solid transparent;border-bottom:2.5px solid #222"></div>
<div class="r" style="left:832px;top:508px;width:24px;height:20px;background:linear-gradient(#b0b0b0,#9c9c9c)"></div>
<div class="r" style="left:837px;top:511.5px;width:14px;height:16.5px;background:#bdbdbd;box-shadow:0 0 0 1.2px #151515;border-radius:1.5px"></div>
<div class="r" style="left:841px;top:516px;width:6.5px;height:6.5px;background:#000"></div>
<div class="r" style="left:857px;top:498px;width:23.7px;height:15px;background:linear-gradient(#bcbcbc,#9c9c9c)"></div>
<div class="r" style="left:863.25px;top:500px;width:12px;height:12px;border-radius:50%;background:radial-gradient(#9c9c9c,#acacac)"></div>
<div class="r" style="left:866.65px;top:503.4px;width:5.2px;height:5.2px;background:#1c1c1c"></div>
<div class="r" style="left:882px;top:498px;width:21.7px;height:15px;background:linear-gradient(#bcbcbc,#9c9c9c)"></div>
<div class="r" style="left:887.25px;top:500px;width:12px;height:12px;border-radius:50%;background:radial-gradient(#9c9c9c,#acacac)"></div>
<div class="r" style="left:891.25px;top:502.6px;width:0;height:0;border-top:3.4px solid transparent;border-bottom:3.4px solid transparent;border-left:5px solid #1c1c1c"></div>
<div class="r" style="left:905px;top:498px;width:22.7px;height:15px;background:linear-gradient(#bcbcbc,#9c9c9c)"></div>
<div class="r" style="left:910.75px;top:500px;width:12px;height:12px;border-radius:50%;background:radial-gradient(#9c9c9c,#acacac)"></div>
<div class="t" style="left:906.75px;width:20px;text-align:center;top:501.68px;font-size:9px;color:#222;font-weight:bold;transform-origin:50% 0;">H</div>
<div class="r" style="left:929px;top:498px;width:21.7px;height:15px;background:linear-gradient(#bcbcbc,#9c9c9c)"></div>
<div class="r" style="left:934.25px;top:500px;width:12px;height:12px;border-radius:50%;background:radial-gradient(#9c9c9c,#acacac)"></div>
<div class="t" style="left:930.25px;width:20px;text-align:center;top:501.54px;font-size:10px;color:#222;font-weight:bold;transform-origin:50% 0;">∞</div>
<div class="r" style="left:952px;top:498px;width:22.7px;height:15px;background:linear-gradient(#424242,#353535)"></div>
<div class="r" style="left:957.75px;top:500px;width:12px;height:12px;border-radius:50%;background:radial-gradient(#363636,#3e3e3e)"></div>
<div class="t" style="left:953.75px;width:20px;text-align:center;top:501.88px;font-size:9px;color:#151515;font-weight:bold;transform-origin:50% 0;">↻</div>
<div class="r" style="left:976px;top:498px;width:21.2px;height:15px;background:linear-gradient(#424242,#353535)"></div>
<div class="r" style="left:981.00px;top:500px;width:12px;height:12px;border-radius:50%;background:radial-gradient(#363636,#3e3e3e)"></div>
<div class="r" style="left:857px;top:514.5px;width:70.8px;height:13.5px;background:linear-gradient(#c0c0c0,#a6a6a6)"></div>
<div class="r" style="left:929px;top:514.5px;width:69px;height:13.5px;background:linear-gradient(#c0c0c0,#a6a6a6)"></div>
<div class="r" style="left:867.5px;top:515.5px;width:13px;height:13px;border-radius:50%;background:radial-gradient(#a0a0a0,#b0b0b0)"></div>
<div class="r" style="left:978.5px;top:515.5px;width:13px;height:13px;border-radius:50%;background:radial-gradient(#a0a0a0,#b0b0b0)"></div>
<div class="t" style="left:864.00px;width:20px;text-align:center;top:516.19px;font-size:11px;color:#333;font-weight:normal;transform-origin:50% 0;">«</div>
<div class="t" style="left:975.00px;width:20px;text-align:center;top:516.19px;font-size:11px;color:#333;font-weight:normal;transform-origin:50% 0;">»</div>
<div class="t" style="left:887.00px;top:516.65px;font-size:14px;color:#333;font-weight:normal;transform-origin:0 0;transform:scaleX(0.8675);-webkit-text-stroke:0">Back</div>
<div class="t" style="left:943.00px;top:516.65px;font-size:14px;color:#333;font-weight:normal;transform-origin:0 0;transform:scaleX(0.9380);-webkit-text-stroke:0">Next</div>
<div class="r" style="left:998px;top:496px;width:2px;height:32px;background:#333"></div>
<div class="r" style="left:578.5px;top:36px;width:1px;height:222px;background:#2f2f2f"></div>
<div class="r" style="left:583px;top:43px;width:417px;height:316px;background:#262626"></div>
<div class="r" style="left:588px;top:47px;width:407px;height:307px;background:#353535"></div>
<div class="t" style="left:731.50px;width:120px;text-align:center;top:50.71px;font-size:9.2px;color:#ddd;font-weight:normal;transform-origin:50% 0;transform:scaleX(0.9247);">CIE 1976 u'v'</div>
<div class="r" style="left:610.5px;top:60.6px;width:382.5px;height:278.4px;background:#232323"></div>
<svg class="r" style="left:610.5px;top:60.6px" width="382" height="278" viewBox="0 0 382 278" shape-rendering="crispEdges"><defs><clipPath id="lc"><path d="M164.35,270.51 L163.65,270.81 L161.41,270.37 L157.52,267.71 L150.2,261.97 L138.28,252.73 L120.14,237.81 L108.14,226.3 L90.71,208.2 L71.9,183.45 L51.5,152.64 L32.17,119.33 L16.82,87.35 L6.41,60.38 L1.02,40.34 L-0.28,26.39 L1.77,16.8 L6.66,10.72 L14.79,7.61 L23.05,6.46 L32.04,6.18 L41.17,6.29 L50.7,6.71 L60.97,7.41 L72.13,8.35 L84.39,9.52 L97.98,10.89 L113.02,12.47 L129.66,14.24 L147.95,16.22 L167.9,18.38 L189.41,20.71 L212.18,23.17 L235.56,25.71 L258.22,28.16 L300.27,32.7 L332.96,36.25 L356.16,38.76 L373.14,40.6 L384.32,41.8 L390.96,42.52 L396.73,43.15 L398.97,43.39Z"/></clipPath></defs><g clip-path="url(#lc)"><rect x="8" y="0" width="8" height="8" fill="#009e00"/><rect x="16" y="0" width="8" height="8" fill="#009e00"/><rect x="24" y="0" width="8" height="8" fill="#009e00"/><rect x="32" y="0" width="8" height="8" fill="#009e00"/><rect x="40" y="0" width="8" height="8" fill="#009e00"/><rect x="48" y="0" width="8" height="8" fill="#009e00"/><rect x="56" y="0" width="8" height="8" fill="#009e00"/><rect x="64" y="0" width="8" height="8" fill="#009e00"/><rect x="0" y="8" width="8" height="8" fill="#009e02"/><rect x="8" y="8" width="8" height="8" fill="#009e01"/><rect x="16" y="8" width="8" height="8" fill="#009e00"/><rect x="24" y="8" width="8" height="8" fill="#009e00"/><rect x="32" y="8" width="8" height="8" fill="#009e00"/><rect x="40" y="8" width="8" height="8" fill="#009e00"/><rect x="48" y="8" width="8" height="8" fill="#009e00"/><rect x="56" y="8" width="8" height="8" fill="#009e00"/><rect x="64" y="8" width="8" height="8" fill="#009e00"/><rect x="72" y="8" width="8" height="8" fill="#009e00"/><rect x="80" y="8" width="8" height="8" fill="#0b9e00"/><rect x="88" y="8" width="8" height="8" fill="#209e00"/><rect x="96" y="8" width="8" height="8" fill="#359e00"/><rect x="104" y="8" width="8" height="8" fill="#4d9e00"/><rect x="112" y="8" width="8" height="8" fill="#669e00"/><rect x="120" y="8" width="8" height="8" fill="#829e00"/><rect x="128" y="8" width="8" height="8" fill="#9e9c00"/><rect x="136" y="8" width="8" height="8" fill="#9e8100"/><rect x="144" y="8" width="8" height="8" fill="#9e6d00"/><rect x="0" y="16" width="8" height="8" fill="#009e10"/><rect x="8" y="16" width="8" height="8" fill="#009e0f"/><rect x="16" y="16" width="8" height="8" fill="#009e0e"/><rect x="24" y="16" width="8" height="8" fill="#009e0d"/><rect x="32" y="16" width="8" height="8" fill="#009e0c"/><rect x="40" y="16" width="8" height="8" fill="#009e0b"/><rect x="48" y="16" width="8" height="8" fill="#009e0a"/><rect x="56" y="16" width="8" height="8" fill="#009e09"/><rect x="64" y="16" width="8" height="8" fill="#009e08"/><rect x="72" y="16" width="8" height="8" fill="#009e06"/><rect x="80" y="16" width="8" height="8" fill="#0eff08"/><rect x="88" y="16" width="8" height="8" fill="#2fff06"/><rect x="96" y="16" width="8" height="8" fill="#54ff03"/><rect x="104" y="16" width="8" height="8" fill="#7bff00"/><rect x="112" y="16" width="8" height="8" fill="#679e00"/><rect x="120" y="16" width="8" height="8" fill="#839e00"/><rect x="128" y="16" width="8" height="8" fill="#9e9900"/><rect x="136" y="16" width="8" height="8" fill="#9e7e00"/><rect x="144" y="16" width="8" height="8" fill="#9e6900"/><rect x="152" y="16" width="8" height="8" fill="#9e5900"/><rect x="160" y="16" width="8" height="8" fill="#9e4c00"/><rect x="168" y="16" width="8" height="8" fill="#9e4200"/><rect x="176" y="16" width="8" height="8" fill="#9e3900"/><rect x="184" y="16" width="8" height="8" fill="#9e3100"/><rect x="192" y="16" width="8" height="8" fill="#9e2b00"/><rect x="200" y="16" width="8" height="8" fill="#9e2500"/><rect x="208" y="16" width="8" height="8" fill="#9e2000"/><rect x="216" y="16" width="8" height="8" fill="#9e1b00"/><rect x="0" y="24" width="8" height="8" fill="#009e1f"/><rect x="8" y="24" width="8" height="8" fill="#009e1f"/><rect x="16" y="24" width="8" height="8" fill="#009e1f"/><rect x="24" y="24" width="8" height="8" fill="#009e1e"/><rect x="32" y="24" width="8" height="8" fill="#009e1e"/><rect x="40" y="24" width="8" height="8" fill="#009e1d"/><rect x="48" y="24" width="8" height="8" fill="#009e1c"/><rect x="56" y="24" width="8" height="8" fill="#009e1c"/><rect x="64" y="24" width="8" height="8" fill="#009e1b"/><rect x="72" y="24" width="8" height="8" fill="#009e1a"/><rect x="80" y="24" width="8" height="8" fill="#09ff2a"/><rect x="88" y="24" width="8" height="8" fill="#2bff28"/><rect x="96" y="24" width="8" height="8" fill="#51ff27"/><rect x="104" y="24" width="8" height="8" fill="#7afe25"/><rect x="112" y="24" width="8" height="8" fill="#a7ff23"/><rect x="120" y="24" width="8" height="8" fill="#d7ff21"/><rect x="128" y="24" width="8" height="8" fill="#fff11e"/><rect x="136" y="24" width="8" height="8" fill="#ffc616"/><rect x="144" y="24" width="8" height="8" fill="#ffa511"/><rect x="152" y="24" width="8" height="8" fill="#ff8b0d"/><rect x="160" y="24" width="8" height="8" fill="#ff7609"/><rect x="168" y="24" width="8" height="8" fill="#ff6506"/><rect x="176" y="24" width="8" height="8" fill="#ff5704"/><rect x="184" y="24" width="8" height="8" fill="#ff4b02"/><rect x="192" y="24" width="8" height="8" fill="#ff4000"/><rect x="200" y="24" width="8" height="8" fill="#9e2200"/><rect x="208" y="24" width="8" height="8" fill="#9e1d00"/><rect x="216" y="24" width="8" height="8" fill="#9e1900"/><rect x="224" y="24" width="8" height="8" fill="#9e1500"/><rect x="232" y="24" width="8" height="8" fill="#9e1100"/><rect x="240" y="24" width="8" height="8" fill="#9e0e00"/><rect x="248" y="24" width="8" height="8" fill="#9e0b00"/><rect x="256" y="24" width="8" height="8" fill="#9e0900"/><rect x="264" y="24" width="8" height="8" fill="#9e0700"/><rect x="272" y="24" width="8" height="8" fill="#9e0400"/><rect x="280" y="24" width="8" height="8" fill="#9e0200"/><rect x="288" y="24" width="8" height="8" fill="#9e0100"/><rect x="0" y="32" width="8" height="8" fill="#009e30"/><rect x="8" y="32" width="8" height="8" fill="#009e30"/><rect x="16" y="32" width="8" height="8" fill="#009e30"/><rect x="24" y="32" width="8" height="8" fill="#009e30"/><rect x="32" y="32" width="8" height="8" fill="#009e30"/><rect x="40" y="32" width="8" height="8" fill="#009e30"/><rect x="48" y="32" width="8" height="8" fill="#009e30"/><rect x="56" y="32" width="8" height="8" fill="#009e30"/><rect x="64" y="32" width="8" height="8" fill="#009e30"/><rect x="72" y="32" width="8" height="8" fill="#009e30"/><rect x="80" y="32" width="8" height="8" fill="#03ff4d"/><rect x="88" y="32" width="8" height="8" fill="#27ff4d"/><rect x="96" y="32" width="8" height="8" fill="#4eff4e"/><rect x="104" y="32" width="8" height="8" fill="#79fe4e"/><rect x="112" y="32" width="8" height="8" fill="#a8ff4e"/><rect x="120" y="32" width="8" height="8" fill="#dbfe4e"/><rect x="128" y="32" width="8" height="8" fill="#ffeb48"/><rect x="136" y="32" width="8" height="8" fill="#ffc03a"/><rect x="144" y="32" width="8" height="8" fill="#fe9f30"/><rect x="152" y="32" width="8" height="8" fill="#ff8529"/><rect x="160" y="32" width="8" height="8" fill="#ff7122"/><rect x="168" y="32" width="8" height="8" fill="#ff601d"/><rect x="176" y="32" width="8" height="8" fill="#ff5219"/><rect x="184" y="32" width="8" height="8" fill="#ff4615"/><rect x="192" y="32" width="8" height="8" fill="#ff3c12"/><rect x="200" y="32" width="8" height="8" fill="#ff330f"/><rect x="208" y="32" width="8" height="8" fill="#ff2b0d"/><rect x="216" y="32" width="8" height="8" fill="#fe240b"/><rect x="224" y="32" width="8" height="8" fill="#ff1e09"/><rect x="232" y="32" width="8" height="8" fill="#ff1907"/><rect x="240" y="32" width="8" height="8" fill="#ff1406"/><rect x="248" y="32" width="8" height="8" fill="#ff0f05"/><rect x="256" y="32" width="8" height="8" fill="#ff0b03"/><rect x="264" y="32" width="8" height="8" fill="#ff0802"/><rect x="272" y="32" width="8" height="8" fill="#ff0401"/><rect x="280" y="32" width="8" height="8" fill="#ff0100"/><rect x="288" y="32" width="8" height="8" fill="#9e0000"/><rect x="296" y="32" width="8" height="8" fill="#9e0000"/><rect x="304" y="32" width="8" height="8" fill="#9e0000"/><rect x="312" y="32" width="8" height="8" fill="#9e0000"/><rect x="320" y="32" width="8" height="8" fill="#9e0000"/><rect x="328" y="32" width="8" height="8" fill="#9e0000"/><rect x="336" y="32" width="8" height="8" fill="#9e0000"/><rect x="344" y="32" width="8" height="8" fill="#9e0000"/><rect x="352" y="32" width="8" height="8" fill="#9e0000"/><rect x="360" y="32" width="8" height="8" fill="#9e0000"/><rect x="0" y="40" width="8" height="8" fill="#009e41"/><rect x="8" y="40" width="8" height="8" fill="#009e41"/><rect x="16" y="40" width="8" height="8" fill="#009e42"/><rect x="24" y="40" width="8" height="8" fill="#009e42"/><rect x="32" y="40" width="8" height="8" fill="#009e43"/><rect x="40" y="40" width="8" height="8" fill="#009e44"/><rect x="48" y="40" width="8" height="8" fill="#009e45"/><rect x="56" y="40" width="8" height="8" fill="#009e45"/><rect x="64" y="40" width="8" height="8" fill="#009e46"/><rect x="72" y="40" width="8" height="8" fill="#009e47"/><rect x="80" y="40" width="8" height="8" fill="#009e48"/><rect x="88" y="40" width="8" height="8" fill="#22ff76"/><rect x="96" y="40" width="8" height="8" fill="#4bff78"/><rect x="104" y="40" width="8" height="8" fill="#78fe7a"/><rect x="112" y="40" width="8" height="8" fill="#a9fe7c"/><rect x="120" y="40" width="8" height="8" fill="#dfff7f"/><rect x="128" y="40" width="8" height="8" fill="#ffe574"/><rect x="136" y="40" width="8" height="8" fill="#ffb960"/><rect x="144" y="40" width="8" height="8" fill="#fe9951"/><rect x="152" y="40" width="8" height="8" fill="#ff7f46"/><rect x="160" y="40" width="8" height="8" fill="#ff6b3c"/><rect x="168" y="40" width="8" height="8" fill="#ff5a35"/><rect x="176" y="40" width="8" height="8" fill="#ff4d2e"/><rect x="184" y="40" width="8" height="8" fill="#ff4129"/><rect x="192" y="40" width="8" height="8" fill="#ff3725"/><rect x="200" y="40" width="8" height="8" fill="#fe2e21"/><rect x="208" y="40" width="8" height="8" fill="#fe271d"/><rect x="216" y="40" width="8" height="8" fill="#ff201a"/><rect x="224" y="40" width="8" height="8" fill="#ff1a17"/><rect x="232" y="40" width="8" height="8" fill="#ff1515"/><rect x="240" y="40" width="8" height="8" fill="#ff1013"/><rect x="248" y="40" width="8" height="8" fill="#ff0c11"/><rect x="256" y="40" width="8" height="8" fill="#fe080f"/><rect x="264" y="40" width="8" height="8" fill="#ff040d"/><rect x="272" y="40" width="8" height="8" fill="#fe010c"/><rect x="280" y="40" width="8" height="8" fill="#9e0006"/><rect x="288" y="40" width="8" height="8" fill="#9e0005"/><rect x="296" y="40" width="8" height="8" fill="#9e0005"/><rect x="304" y="40" width="8" height="8" fill="#9e0004"/><rect x="312" y="40" width="8" height="8" fill="#9e0003"/><rect x="320" y="40" width="8" height="8" fill="#9e0003"/><rect x="328" y="40" width="8" height="8" fill="#9e0002"/><rect x="336" y="40" width="8" height="8" fill="#9e0002"/><rect x="344" y="40" width="8" height="8" fill="#9e0001"/><rect x="352" y="40" width="8" height="8" fill="#9e0001"/><rect x="360" y="40" width="8" height="8" fill="#9e0000"/><rect x="368" y="40" width="8" height="8" fill="#9e0000"/><rect x="376" y="40" width="8" height="8" fill="#9e0000"/><rect x="0" y="48" width="8" height="8" fill="#009e53"/><rect x="8" y="48" width="8" height="8" fill="#009e54"/><rect x="16" y="48" width="8" height="8" fill="#009e55"/><rect x="24" y="48" width="8" height="8" fill="#009e57"/><rect x="32" y="48" width="8" height="8" fill="#009e58"/><rect x="40" y="48" width="8" height="8" fill="#009e59"/><rect x="48" y="48" width="8" height="8" fill="#009e5b"/><rect x="56" y="48" width="8" height="8" fill="#009e5d"/><rect x="64" y="48" width="8" height="8" fill="#009e5e"/><rect x="72" y="48" width="8" height="8" fill="#009e60"/><rect x="80" y="48" width="8" height="8" fill="#009e62"/><rect x="88" y="48" width="8" height="8" fill="#1dffa3"/><rect x="96" y="48" width="8" height="8" fill="#48ffa7"/><rect x="104" y="48" width="8" height="8" fill="#77ffab"/><rect x="112" y="48" width="8" height="8" fill="#aaffb0"/><rect x="120" y="48" width="8" height="8" fill="#e3feb5"/><rect x="128" y="48" width="8" height="8" fill="#ffdfa4"/><rect x="136" y="48" width="8" height="8" fill="#ffb388"/><rect x="144" y="48" width="8" height="8" fill="#fe9274"/><rect x="152" y="48" width="8" height="8" fill="#ff7964"/><rect x="160" y="48" width="8" height="8" fill="#ff6557"/><rect x="168" y="48" width="8" height="8" fill="#ff554d"/><rect x="176" y="48" width="8" height="8" fill="#ff4745"/><rect x="184" y="48" width="8" height="8" fill="#ff3c3d"/><rect x="192" y="48" width="8" height="8" fill="#ff3237"/><rect x="200" y="48" width="8" height="8" fill="#fe2a32"/><rect x="208" y="48" width="8" height="8" fill="#ff222d"/><rect x="216" y="48" width="8" height="8" fill="#ff1c29"/><rect x="224" y="48" width="8" height="8" fill="#ff1626"/><rect x="232" y="48" width="8" height="8" fill="#ff1123"/><rect x="240" y="48" width="8" height="8" fill="#ff0c20"/><rect x="248" y="48" width="8" height="8" fill="#ff081d"/><rect x="256" y="48" width="8" height="8" fill="#ff041b"/><rect x="264" y="48" width="8" height="8" fill="#fe0118"/><rect x="272" y="48" width="8" height="8" fill="#9e000e"/><rect x="280" y="48" width="8" height="8" fill="#9e000d"/><rect x="288" y="48" width="8" height="8" fill="#9e000c"/><rect x="296" y="48" width="8" height="8" fill="#9e000b"/><rect x="304" y="48" width="8" height="8" fill="#9e000a"/><rect x="312" y="48" width="8" height="8" fill="#9e0009"/><rect x="320" y="48" width="8" height="8" fill="#9e0008"/><rect x="328" y="48" width="8" height="8" fill="#9e0007"/><rect x="336" y="48" width="8" height="8" fill="#9e0007"/><rect x="344" y="48" width="8" height="8" fill="#9e0006"/><rect x="352" y="48" width="8" height="8" fill="#9e0005"/><rect x="360" y="48" width="8" height="8" fill="#9e0005"/><rect x="368" y="48" width="8" height="8" fill="#9e0004"/><rect x="376" y="48" width="8" height="8" fill="#9e0004"/><rect x="0" y="56" width="8" height="8" fill="#009e66"/><rect x="8" y="56" width="8" height="8" fill="#009e68"/><rect x="16" y="56" width="8" height="8" fill="#009e6a"/><rect x="24" y="56" width="8" height="8" fill="#009e6c"/><rect x="32" y="56" width="8" height="8" fill="#009e6e"/><rect x="40" y="56" width="8" height="8" fill="#009e71"/><rect x="48" y="56" width="8" height="8" fill="#009e73"/><rect x="56" y="56" width="8" height="8" fill="#009e76"/><rect x="64" y="56" width="8" height="8" fill="#009e79"/><rect x="72" y="56" width="8" height="8" fill="#009e7c"/><rect x="80" y="56" width="8" height="8" fill="#009e7f"/><rect x="88" y="56" width="8" height="8" fill="#18ffd3"/><rect x="96" y="56" width="8" height="8" fill="#44ffda"/><rect x="104" y="56" width="8" height="8" fill="#75ffe1"/><rect x="112" y="56" width="8" height="8" fill="#acffe9"/><rect x="120" y="56" width="8" height="8" fill="#e8fff2"/><rect x="128" y="56" width="8" height="8" fill="#ffd8d6"/><rect x="136" y="56" width="8" height="8" fill="#ffacb2"/><rect x="144" y="56" width="8" height="8" fill="#ff8b98"/><rect x="152" y="56" width="8" height="8" fill="#ff7283"/><rect x="160" y="56" width="8" height="8" fill="#ff5f73"/><rect x="168" y="56" width="8" height="8" fill="#ff4f66"/><rect x="176" y="56" width="8" height="8" fill="#ff425b"/><rect x="184" y="56" width="8" height="8" fill="#ff3752"/><rect x="192" y="56" width="8" height="8" fill="#ff2d4b"/><rect x="200" y="56" width="8" height="8" fill="#ff2544"/><rect x="208" y="56" width="8" height="8" fill="#ff1e3e"/><rect x="216" y="56" width="8" height="8" fill="#fe1839"/><rect x="224" y="56" width="8" height="8" fill="#ff1234"/><rect x="232" y="56" width="8" height="8" fill="#ff0d30"/><rect x="240" y="56" width="8" height="8" fill="#ff092d"/><rect x="248" y="56" width="8" height="8" fill="#ff0529"/><rect x="256" y="56" width="8" height="8" fill="#ff0127"/><rect x="264" y="56" width="8" height="8" fill="#9e0016"/><rect x="272" y="56" width="8" height="8" fill="#9e0014"/><rect x="280" y="56" width="8" height="8" fill="#9e0013"/><rect x="288" y="56" width="8" height="8" fill="#9e0012"/><rect x="296" y="56" width="8" height="8" fill="#9e0011"/><rect x="304" y="56" width="8" height="8" fill="#9e000f"/><rect x="312" y="56" width="8" height="8" fill="#9e000e"/><rect x="320" y="56" width="8" height="8" fill="#9e000d"/><rect x="328" y="56" width="8" height="8" fill="#9e000d"/><rect x="336" y="56" width="8" height="8" fill="#9e000c"/><rect x="344" y="56" width="8" height="8" fill="#9e000b"/><rect x="352" y="56" width="8" height="8" fill="#9e000a"/><rect x="360" y="56" width="8" height="8" fill="#9e0009"/><rect x="368" y="56" width="8" height="8" fill="#9e0009"/><rect x="376" y="56" width="8" height="8" fill="#9e0008"/><rect x="0" y="64" width="8" height="8" fill="#009e7b"/><rect x="8" y="64" width="8" height="8" fill="#009e7e"/><rect x="16" y="64" width="8" height="8" fill="#009e80"/><rect x="24" y="64" width="8" height="8" fill="#009e83"/><rect x="32" y="64" width="8" height="8" fill="#009e86"/><rect x="40" y="64" width="8" height="8" fill="#009e8a"/><rect x="48" y="64" width="8" height="8" fill="#009e8d"/><rect x="56" y="64" width="8" height="8" fill="#009e91"/><rect x="64" y="64" width="8" height="8" fill="#009e95"/><rect x="72" y="64" width="8" height="8" fill="#009e9a"/><rect x="80" y="64" width="8" height="8" fill="#009d9e"/><rect x="88" y="64" width="8" height="8" fill="#11f4ff"/><rect x="96" y="64" width="8" height="8" fill="#3becff"/><rect x="104" y="64" width="8" height="8" fill="#67e3fe"/><rect x="112" y="64" width="8" height="8" fill="#94daff"/><rect x="120" y="64" width="8" height="8" fill="#c2d0ff"/><rect x="128" y="64" width="8" height="8" fill="#f2c6ff"/><rect x="136" y="64" width="8" height="8" fill="#ffa4de"/><rect x="144" y="64" width="8" height="8" fill="#ff84bd"/><rect x="152" y="64" width="8" height="8" fill="#ff6ca4"/><rect x="160" y="64" width="8" height="8" fill="#ff5890"/><rect x="168" y="64" width="8" height="8" fill="#ff4980"/><rect x="176" y="64" width="8" height="8" fill="#fe3c73"/><rect x="184" y="64" width="8" height="8" fill="#ff3168"/><rect x="192" y="64" width="8" height="8" fill="#ff285e"/><rect x="200" y="64" width="8" height="8" fill="#ff2056"/><rect x="208" y="64" width="8" height="8" fill="#ff194f"/><rect x="216" y="64" width="8" height="8" fill="#ff1349"/><rect x="224" y="64" width="8" height="8" fill="#ff0e43"/><rect x="232" y="64" width="8" height="8" fill="#ff093f"/><rect x="240" y="64" width="8" height="8" fill="#ff053a"/><rect x="248" y="64" width="8" height="8" fill="#fe0136"/><rect x="256" y="64" width="8" height="8" fill="#9e001f"/><rect x="264" y="64" width="8" height="8" fill="#9e001d"/><rect x="272" y="64" width="8" height="8" fill="#9e001b"/><rect x="280" y="64" width="8" height="8" fill="#9e001a"/><rect x="288" y="64" width="8" height="8" fill="#9e0018"/><rect x="296" y="64" width="8" height="8" fill="#9e0017"/><rect x="304" y="64" width="8" height="8" fill="#9e0015"/><rect x="312" y="64" width="8" height="8" fill="#9e0014"/><rect x="320" y="64" width="8" height="8" fill="#9e0013"/><rect x="328" y="64" width="8" height="8" fill="#9e0012"/><rect x="336" y="64" width="8" height="8" fill="#9e0011"/><rect x="344" y="64" width="8" height="8" fill="#9e0010"/><rect x="352" y="64" width="8" height="8" fill="#9e000f"/><rect x="360" y="64" width="8" height="8" fill="#9e000e"/><rect x="368" y="64" width="8" height="8" fill="#9e000d"/><rect x="376" y="64" width="8" height="8" fill="#9e000c"/><rect x="8" y="72" width="8" height="8" fill="#009e95"/><rect x="16" y="72" width="8" height="8" fill="#009e98"/><rect x="24" y="72" width="8" height="8" fill="#009e9c"/><rect x="32" y="72" width="8" height="8" fill="#009b9e"/><rect x="40" y="72" width="8" height="8" fill="#00979e"/><rect x="48" y="72" width="8" height="8" fill="#00939e"/><rect x="56" y="72" width="8" height="8" fill="#008e9e"/><rect x="64" y="72" width="8" height="8" fill="#008a9e"/><rect x="72" y="72" width="8" height="8" fill="#00859e"/><rect x="80" y="72" width="8" height="8" fill="#00809e"/><rect x="88" y="72" width="8" height="8" fill="#08c8ff"/><rect x="96" y="72" width="8" height="8" fill="#2dc0fe"/><rect x="104" y="72" width="8" height="8" fill="#52b7ff"/><rect x="112" y="72" width="8" height="8" fill="#78afff"/><rect x="120" y="72" width="8" height="8" fill="#9fa6ff"/><rect x="128" y="72" width="8" height="8" fill="#c89dff"/><rect x="136" y="72" width="8" height="8" fill="#f194ff"/><rect x="144" y="72" width="8" height="8" fill="#ff7de4"/><rect x="152" y="72" width="8" height="8" fill="#ff65c6"/><rect x="160" y="72" width="8" height="8" fill="#ff52ae"/><rect x="168" y="72" width="8" height="8" fill="#fe439b"/><rect x="176" y="72" width="8" height="8" fill="#ff368b"/><rect x="184" y="72" width="8" height="8" fill="#ff2c7e"/><rect x="192" y="72" width="8" height="8" fill="#ff2373"/><rect x="200" y="72" width="8" height="8" fill="#ff1b69"/><rect x="208" y="72" width="8" height="8" fill="#fe1461"/><rect x="216" y="72" width="8" height="8" fill="#ff0f59"/><rect x="224" y="72" width="8" height="8" fill="#ff0953"/><rect x="232" y="72" width="8" height="8" fill="#ff054d"/><rect x="240" y="72" width="8" height="8" fill="#ff0148"/><rect x="248" y="72" width="8" height="8" fill="#9e0029"/><rect x="256" y="72" width="8" height="8" fill="#9e0027"/><rect x="264" y="72" width="8" height="8" fill="#9e0024"/><rect x="272" y="72" width="8" height="8" fill="#9e0022"/><rect x="280" y="72" width="8" height="8" fill="#9e0020"/><rect x="288" y="72" width="8" height="8" fill="#9e001e"/><rect x="296" y="72" width="8" height="8" fill="#9e001d"/><rect x="304" y="72" width="8" height="8" fill="#9e001b"/><rect x="312" y="72" width="8" height="8" fill="#9e001a"/><rect x="320" y="72" width="8" height="8" fill="#9e0018"/><rect x="328" y="72" width="8" height="8" fill="#9e0017"/><rect x="336" y="72" width="8" height="8" fill="#9e0016"/><rect x="344" y="72" width="8" height="8" fill="#9e0015"/><rect x="352" y="72" width="8" height="8" fill="#9e0014"/><rect x="360" y="72" width="8" height="8" fill="#9e0013"/><rect x="368" y="72" width="8" height="8" fill="#9e0012"/><rect x="8" y="80" width="8" height="8" fill="#008f9e"/><rect x="16" y="80" width="8" height="8" fill="#008c9e"/><rect x="24" y="80" width="8" height="8" fill="#00889e"/><rect x="32" y="80" width="8" height="8" fill="#00849e"/><rect x="40" y="80" width="8" height="8" fill="#00809e"/><rect x="48" y="80" width="8" height="8" fill="#007c9e"/><rect x="56" y="80" width="8" height="8" fill="#00789e"/><rect x="64" y="80" width="8" height="8" fill="#00749e"/><rect x="72" y="80" width="8" height="8" fill="#006f9e"/><rect x="80" y="80" width="8" height="8" fill="#006b9e"/><rect x="88" y="80" width="8" height="8" fill="#02a6ff"/><rect x="96" y="80" width="8" height="8" fill="#219eff"/><rect x="104" y="80" width="8" height="8" fill="#4297fe"/><rect x="112" y="80" width="8" height="8" fill="#638fff"/><rect x="120" y="80" width="8" height="8" fill="#8587ff"/><rect x="128" y="80" width="8" height="8" fill="#a87fff"/><rect x="136" y="80" width="8" height="8" fill="#cc77fe"/><rect x="144" y="80" width="8" height="8" fill="#f06eff"/><rect x="152" y="80" width="8" height="8" fill="#ff5de9"/><rect x="160" y="80" width="8" height="8" fill="#ff4bcd"/><rect x="168" y="80" width="8" height="8" fill="#ff3cb7"/><rect x="176" y="80" width="8" height="8" fill="#ff30a4"/><rect x="184" y="80" width="8" height="8" fill="#ff2695"/><rect x="192" y="80" width="8" height="8" fill="#ff1d87"/><rect x="200" y="80" width="8" height="8" fill="#ff167c"/><rect x="208" y="80" width="8" height="8" fill="#ff1072"/><rect x="216" y="80" width="8" height="8" fill="#ff0a6a"/><rect x="224" y="80" width="8" height="8" fill="#ff0562"/><rect x="232" y="80" width="8" height="8" fill="#fe015c"/><rect x="240" y="80" width="8" height="8" fill="#9e0035"/><rect x="248" y="80" width="8" height="8" fill="#9e0032"/><rect x="256" y="80" width="8" height="8" fill="#9e002f"/><rect x="264" y="80" width="8" height="8" fill="#9e002c"/><rect x="272" y="80" width="8" height="8" fill="#9e0029"/><rect x="280" y="80" width="8" height="8" fill="#9e0027"/><rect x="288" y="80" width="8" height="8" fill="#9e0025"/><rect x="296" y="80" width="8" height="8" fill="#9e0023"/><rect x="304" y="80" width="8" height="8" fill="#9e0021"/><rect x="312" y="80" width="8" height="8" fill="#9e001f"/><rect x="320" y="80" width="8" height="8" fill="#9e001e"/><rect x="328" y="80" width="8" height="8" fill="#9e001c"/><rect x="336" y="80" width="8" height="8" fill="#9e001b"/><rect x="344" y="80" width="8" height="8" fill="#9e001a"/><rect x="352" y="80" width="8" height="8" fill="#9e0018"/><rect x="360" y="80" width="8" height="8" fill="#9e0017"/><rect x="16" y="88" width="8" height="8" fill="#00799e"/><rect x="24" y="88" width="8" height="8" fill="#00759e"/><rect x="32" y="88" width="8" height="8" fill="#00729e"/><rect x="40" y="88" width="8" height="8" fill="#006e9e"/><rect x="48" y="88" width="8" height="8" fill="#006a9e"/><rect x="56" y="88" width="8" height="8" fill="#00669e"/><rect x="64" y="88" width="8" height="8" fill="#00629e"/><rect x="72" y="88" width="8" height="8" fill="#005e9e"/><rect x="80" y="88" width="8" height="8" fill="#005a9e"/><rect x="88" y="88" width="8" height="8" fill="#00569e"/><rect x="96" y="88" width="8" height="8" fill="#1984ff"/><rect x="104" y="88" width="8" height="8" fill="#367dfe"/><rect x="112" y="88" width="8" height="8" fill="#5376ff"/><rect x="120" y="88" width="8" height="8" fill="#716fff"/><rect x="128" y="88" width="8" height="8" fill="#9068ff"/><rect x="136" y="88" width="8" height="8" fill="#af60ff"/><rect x="144" y="88" width="8" height="8" fill="#cf58fe"/><rect x="152" y="88" width="8" height="8" fill="#f051ff"/><rect x="160" y="88" width="8" height="8" fill="#ff44ed"/><rect x="168" y="88" width="8" height="8" fill="#fe35d3"/><rect x="176" y="88" width="8" height="8" fill="#ff2abe"/><rect x="184" y="88" width="8" height="8" fill="#ff20ac"/><rect x="192" y="88" width="8" height="8" fill="#ff189d"/><rect x="200" y="88" width="8" height="8" fill="#ff1190"/><rect x="208" y="88" width="8" height="8" fill="#ff0b85"/><rect x="216" y="88" width="8" height="8" fill="#ff057b"/><rect x="224" y="88" width="8" height="8" fill="#ff0172"/><rect x="232" y="88" width="8" height="8" fill="#9e0042"/><rect x="240" y="88" width="8" height="8" fill="#9e003e"/><rect x="248" y="88" width="8" height="8" fill="#9e003a"/><rect x="256" y="88" width="8" height="8" fill="#9e0036"/><rect x="264" y="88" width="8" height="8" fill="#9e0033"/><rect x="272" y="88" width="8" height="8" fill="#9e0030"/><rect x="280" y="88" width="8" height="8" fill="#9e002e"/><rect x="288" y="88" width="8" height="8" fill="#9e002b"/><rect x="296" y="88" width="8" height="8" fill="#9e0029"/><rect x="304" y="88" width="8" height="8" fill="#9e0027"/><rect x="312" y="88" width="8" height="8" fill="#9e0025"/><rect x="320" y="88" width="8" height="8" fill="#9e0023"/><rect x="328" y="88" width="8" height="8" fill="#9e0022"/><rect x="336" y="88" width="8" height="8" fill="#9e0020"/><rect x="344" y="88" width="8" height="8" fill="#9e001f"/><rect x="352" y="88" width="8" height="8" fill="#9e001d"/><rect x="16" y="96" width="8" height="8" fill="#00699e"/><rect x="24" y="96" width="8" height="8" fill="#00669e"/><rect x="32" y="96" width="8" height="8" fill="#00639e"/><rect x="40" y="96" width="8" height="8" fill="#005f9e"/><rect x="48" y="96" width="8" height="8" fill="#005c9e"/><rect x="56" y="96" width="8" height="8" fill="#00589e"/><rect x="64" y="96" width="8" height="8" fill="#00549e"/><rect x="72" y="96" width="8" height="8" fill="#00519e"/><rect x="80" y="96" width="8" height="8" fill="#004d9e"/><rect x="88" y="96" width="8" height="8" fill="#00499e"/><rect x="96" y="96" width="8" height="8" fill="#1270fe"/><rect x="104" y="96" width="8" height="8" fill="#2c69ff"/><rect x="112" y="96" width="8" height="8" fill="#4662ff"/><rect x="120" y="96" width="8" height="8" fill="#615cff"/><rect x="128" y="96" width="8" height="8" fill="#7c55ff"/><rect x="136" y="96" width="8" height="8" fill="#984efe"/><rect x="144" y="96" width="8" height="8" fill="#b547ff"/><rect x="152" y="96" width="8" height="8" fill="#d240ff"/><rect x="160" y="96" width="8" height="8" fill="#ef39ff"/><rect x="168" y="96" width="8" height="8" fill="#ff2ef1"/><rect x="176" y="96" width="8" height="8" fill="#ff23d8"/><rect x="184" y="96" width="8" height="8" fill="#ff1ac4"/><rect x="192" y="96" width="8" height="8" fill="#ff12b3"/><rect x="200" y="96" width="8" height="8" fill="#ff0ba4"/><rect x="208" y="96" width="8" height="8" fill="#ff0697"/><rect x="216" y="96" width="8" height="8" fill="#ff008c"/><rect x="224" y="96" width="8" height="8" fill="#9e0051"/><rect x="232" y="96" width="8" height="8" fill="#9e004b"/><rect x="240" y="96" width="8" height="8" fill="#9e0047"/><rect x="248" y="96" width="8" height="8" fill="#9e0042"/><rect x="256" y="96" width="8" height="8" fill="#9e003e"/><rect x="264" y="96" width="8" height="8" fill="#9e003b"/><rect x="272" y="96" width="8" height="8" fill="#9e0038"/><rect x="280" y="96" width="8" height="8" fill="#9e0035"/><rect x="288" y="96" width="8" height="8" fill="#9e0032"/><rect x="296" y="96" width="8" height="8" fill="#9e002f"/><rect x="304" y="96" width="8" height="8" fill="#9e002d"/><rect x="312" y="96" width="8" height="8" fill="#9e002b"/><rect x="320" y="96" width="8" height="8" fill="#9e0029"/><rect x="328" y="96" width="8" height="8" fill="#9e0027"/><rect x="336" y="96" width="8" height="8" fill="#9e0025"/><rect x="344" y="96" width="8" height="8" fill="#9e0024"/><rect x="24" y="104" width="8" height="8" fill="#00599e"/><rect x="32" y="104" width="8" height="8" fill="#00569e"/><rect x="40" y="104" width="8" height="8" fill="#00539e"/><rect x="48" y="104" width="8" height="8" fill="#004f9e"/><rect x="56" y="104" width="8" height="8" fill="#004c9e"/><rect x="64" y="104" width="8" height="8" fill="#00499e"/><rect x="72" y="104" width="8" height="8" fill="#00459e"/><rect x="80" y="104" width="8" height="8" fill="#00429e"/><rect x="88" y="104" width="8" height="8" fill="#003e9e"/><rect x="96" y="104" width="8" height="8" fill="#0c5eff"/><rect x="104" y="104" width="8" height="8" fill="#2458ff"/><rect x="112" y="104" width="8" height="8" fill="#3c52ff"/><rect x="120" y="104" width="8" height="8" fill="#544cfe"/><rect x="128" y="104" width="8" height="8" fill="#6d46ff"/><rect x="136" y="104" width="8" height="8" fill="#863fff"/><rect x="144" y="104" width="8" height="8" fill="#9f39ff"/><rect x="152" y="104" width="8" height="8" fill="#b932fe"/><rect x="160" y="104" width="8" height="8" fill="#d42cff"/><rect x="168" y="104" width="8" height="8" fill="#ee25ff"/><rect x="176" y="104" width="8" height="8" fill="#ff1df4"/><rect x="184" y="104" width="8" height="8" fill="#ff14dd"/><rect x="192" y="104" width="8" height="8" fill="#fe0cc9"/><rect x="200" y="104" width="8" height="8" fill="#ff06b9"/><rect x="208" y="104" width="8" height="8" fill="#ff00aa"/><rect x="216" y="104" width="8" height="8" fill="#9e0062"/><rect x="224" y="104" width="8" height="8" fill="#9e005b"/><rect x="232" y="104" width="8" height="8" fill="#9e0055"/><rect x="240" y="104" width="8" height="8" fill="#9e0050"/><rect x="248" y="104" width="8" height="8" fill="#9e004b"/><rect x="256" y="104" width="8" height="8" fill="#9e0047"/><rect x="264" y="104" width="8" height="8" fill="#9e0043"/><rect x="272" y="104" width="8" height="8" fill="#9e003f"/><rect x="280" y="104" width="8" height="8" fill="#9e003c"/><rect x="288" y="104" width="8" height="8" fill="#9e0039"/><rect x="296" y="104" width="8" height="8" fill="#9e0036"/><rect x="304" y="104" width="8" height="8" fill="#9e0033"/><rect x="312" y="104" width="8" height="8" fill="#9e0031"/><rect x="320" y="104" width="8" height="8" fill="#9e002f"/><rect x="328" y="104" width="8" height="8" fill="#9e002d"/><rect x="336" y="104" width="8" height="8" fill="#9e002b"/><rect x="24" y="112" width="8" height="8" fill="#004f9e"/><rect x="32" y="112" width="8" height="8" fill="#004c9e"/><rect x="40" y="112" width="8" height="8" fill="#00489e"/><rect x="48" y="112" width="8" height="8" fill="#00459e"/><rect x="56" y="112" width="8" height="8" fill="#00429e"/><rect x="64" y="112" width="8" height="8" fill="#003f9e"/><rect x="72" y="112" width="8" height="8" fill="#003c9e"/><rect x="80" y="112" width="8" height="8" fill="#00389e"/><rect x="88" y="112" width="8" height="8" fill="#00359e"/><rect x="96" y="112" width="8" height="8" fill="#0850ff"/><rect x="104" y="112" width="8" height="8" fill="#1d4bff"/><rect x="112" y="112" width="8" height="8" fill="#3345fe"/><rect x="120" y="112" width="8" height="8" fill="#493fff"/><rect x="128" y="112" width="8" height="8" fill="#6039ff"/><rect x="136" y="112" width="8" height="8" fill="#7633ff"/><rect x="144" y="112" width="8" height="8" fill="#8e2dff"/><rect x="152" y="112" width="8" height="8" fill="#a527ff"/><rect x="160" y="112" width="8" height="8" fill="#bd21ff"/><rect x="168" y="112" width="8" height="8" fill="#d51bfe"/><rect x="176" y="112" width="8" height="8" fill="#ee14ff"/><rect x="184" y="112" width="8" height="8" fill="#ff0df6"/><rect x="192" y="112" width="8" height="8" fill="#fe06e0"/><rect x="200" y="112" width="8" height="8" fill="#ff00ce"/><rect x="208" y="112" width="8" height="8" fill="#9e0076"/><rect x="216" y="112" width="8" height="8" fill="#9e006d"/><rect x="224" y="112" width="8" height="8" fill="#9e0066"/><rect x="232" y="112" width="8" height="8" fill="#9e005f"/><rect x="240" y="112" width="8" height="8" fill="#9e0059"/><rect x="248" y="112" width="8" height="8" fill="#9e0054"/><rect x="256" y="112" width="8" height="8" fill="#9e004f"/><rect x="264" y="112" width="8" height="8" fill="#9e004a"/><rect x="272" y="112" width="8" height="8" fill="#9e0046"/><rect x="280" y="112" width="8" height="8" fill="#9e0043"/><rect x="288" y="112" width="8" height="8" fill="#9e0040"/><rect x="296" y="112" width="8" height="8" fill="#9e003c"/><rect x="304" y="112" width="8" height="8" fill="#9e003a"/><rect x="312" y="112" width="8" height="8" fill="#9e0037"/><rect x="320" y="112" width="8" height="8" fill="#9e0035"/><rect x="328" y="112" width="8" height="8" fill="#9e0032"/><rect x="32" y="120" width="8" height="8" fill="#00439e"/><rect x="40" y="120" width="8" height="8" fill="#00409e"/><rect x="48" y="120" width="8" height="8" fill="#003d9e"/><rect x="56" y="120" width="8" height="8" fill="#003a9e"/><rect x="64" y="120" width="8" height="8" fill="#00379e"/><rect x="72" y="120" width="8" height="8" fill="#00349e"/><rect x="80" y="120" width="8" height="8" fill="#00309e"/><rect x="88" y="120" width="8" height="8" fill="#002d9e"/><rect x="96" y="120" width="8" height="8" fill="#0444ff"/><rect x="104" y="120" width="8" height="8" fill="#173fff"/><rect x="112" y="120" width="8" height="8" fill="#2c3aff"/><rect x="120" y="120" width="8" height="8" fill="#4034ff"/><rect x="128" y="120" width="8" height="8" fill="#552fff"/><rect x="136" y="120" width="8" height="8" fill="#6a29ff"/><rect x="144" y="120" width="8" height="8" fill="#7f23ff"/><rect x="152" y="120" width="8" height="8" fill="#941eff"/><rect x="160" y="120" width="8" height="8" fill="#aa18fe"/><rect x="168" y="120" width="8" height="8" fill="#c012ff"/><rect x="176" y="120" width="8" height="8" fill="#d70cff"/><rect x="184" y="120" width="8" height="8" fill="#ee06ff"/><rect x="192" y="120" width="8" height="8" fill="#ff00f8"/><rect x="200" y="120" width="8" height="8" fill="#9e008d"/><rect x="208" y="120" width="8" height="8" fill="#9e0082"/><rect x="216" y="120" width="8" height="8" fill="#9e0079"/><rect x="224" y="120" width="8" height="8" fill="#9e0070"/><rect x="232" y="120" width="8" height="8" fill="#9e0069"/><rect x="240" y="120" width="8" height="8" fill="#9e0062"/><rect x="248" y="120" width="8" height="8" fill="#9e005c"/><rect x="256" y="120" width="8" height="8" fill="#9e0057"/><rect x="264" y="120" width="8" height="8" fill="#9e0052"/><rect x="272" y="120" width="8" height="8" fill="#9e004e"/><rect x="280" y="120" width="8" height="8" fill="#9e004a"/><rect x="288" y="120" width="8" height="8" fill="#9e0046"/><rect x="296" y="120" width="8" height="8" fill="#9e0043"/><rect x="304" y="120" width="8" height="8" fill="#9e0040"/><rect x="312" y="120" width="8" height="8" fill="#9e003d"/><rect x="32" y="128" width="8" height="8" fill="#003b9e"/><rect x="40" y="128" width="8" height="8" fill="#00389e"/><rect x="48" y="128" width="8" height="8" fill="#00359e"/><rect x="56" y="128" width="8" height="8" fill="#00329e"/><rect x="64" y="128" width="8" height="8" fill="#00309e"/><rect x="72" y="128" width="8" height="8" fill="#002d9e"/><rect x="80" y="128" width="8" height="8" fill="#002a9e"/><rect x="88" y="128" width="8" height="8" fill="#00279e"/><rect x="96" y="128" width="8" height="8" fill="#003aff"/><rect x="104" y="128" width="8" height="8" fill="#1335ff"/><rect x="112" y="128" width="8" height="8" fill="#2530ff"/><rect x="120" y="128" width="8" height="8" fill="#382bfe"/><rect x="128" y="128" width="8" height="8" fill="#4b26ff"/><rect x="136" y="128" width="8" height="8" fill="#5f20ff"/><rect x="144" y="128" width="8" height="8" fill="#721bff"/><rect x="152" y="128" width="8" height="8" fill="#8616fe"/><rect x="160" y="128" width="8" height="8" fill="#9a10ff"/><rect x="168" y="128" width="8" height="8" fill="#af0bff"/><rect x="176" y="128" width="8" height="8" fill="#c305ff"/><rect x="184" y="128" width="8" height="8" fill="#d800ff"/><rect x="192" y="128" width="8" height="8" fill="#93009e"/><rect x="200" y="128" width="8" height="8" fill="#9e009b"/><rect x="208" y="128" width="8" height="8" fill="#9e008f"/><rect x="216" y="128" width="8" height="8" fill="#9e0084"/><rect x="224" y="128" width="8" height="8" fill="#9e007b"/><rect x="232" y="128" width="8" height="8" fill="#9e0073"/><rect x="240" y="128" width="8" height="8" fill="#9e006c"/><rect x="248" y="128" width="8" height="8" fill="#9e0066"/><rect x="256" y="128" width="8" height="8" fill="#9e0060"/><rect x="264" y="128" width="8" height="8" fill="#9e005b"/><rect x="272" y="128" width="8" height="8" fill="#9e0056"/><rect x="280" y="128" width="8" height="8" fill="#9e0051"/><rect x="288" y="128" width="8" height="8" fill="#9e004d"/><rect x="296" y="128" width="8" height="8" fill="#9e004a"/><rect x="304" y="128" width="8" height="8" fill="#9e0046"/><rect x="40" y="136" width="8" height="8" fill="#00319e"/><rect x="48" y="136" width="8" height="8" fill="#002f9e"/><rect x="56" y="136" width="8" height="8" fill="#002c9e"/><rect x="64" y="136" width="8" height="8" fill="#00299e"/><rect x="72" y="136" width="8" height="8" fill="#00279e"/><rect x="80" y="136" width="8" height="8" fill="#00249e"/><rect x="88" y="136" width="8" height="8" fill="#00219e"/><rect x="96" y="136" width="8" height="8" fill="#001e9e"/><rect x="104" y="136" width="8" height="8" fill="#0e2cff"/><rect x="112" y="136" width="8" height="8" fill="#2027ff"/><rect x="120" y="136" width="8" height="8" fill="#3123fe"/><rect x="128" y="136" width="8" height="8" fill="#431eff"/><rect x="136" y="136" width="8" height="8" fill="#5519ff"/><rect x="144" y="136" width="8" height="8" fill="#6714ff"/><rect x="152" y="136" width="8" height="8" fill="#7a0fff"/><rect x="160" y="136" width="8" height="8" fill="#8c0afe"/><rect x="168" y="136" width="8" height="8" fill="#9f05ff"/><rect x="176" y="136" width="8" height="8" fill="#6e009e"/><rect x="184" y="136" width="8" height="8" fill="#7a009e"/><rect x="192" y="136" width="8" height="8" fill="#87009e"/><rect x="200" y="136" width="8" height="8" fill="#93009e"/><rect x="208" y="136" width="8" height="8" fill="#9e009c"/><rect x="216" y="136" width="8" height="8" fill="#9e0090"/><rect x="224" y="136" width="8" height="8" fill="#9e0086"/><rect x="232" y="136" width="8" height="8" fill="#9e007e"/><rect x="240" y="136" width="8" height="8" fill="#9e0076"/><rect x="248" y="136" width="8" height="8" fill="#9e006f"/><rect x="256" y="136" width="8" height="8" fill="#9e0068"/><rect x="264" y="136" width="8" height="8" fill="#9e0063"/><rect x="272" y="136" width="8" height="8" fill="#9e005e"/><rect x="280" y="136" width="8" height="8" fill="#9e0059"/><rect x="288" y="136" width="8" height="8" fill="#9e0055"/><rect x="296" y="136" width="8" height="8" fill="#9e0051"/><rect x="40" y="144" width="8" height="8" fill="#002c9e"/><rect x="48" y="144" width="8" height="8" fill="#00299e"/><rect x="56" y="144" width="8" height="8" fill="#00269e"/><rect x="64" y="144" width="8" height="8" fill="#00249e"/><rect x="72" y="144" width="8" height="8" fill="#00219e"/><rect x="80" y="144" width="8" height="8" fill="#001f9e"/><rect x="88" y="144" width="8" height="8" fill="#001c9e"/><rect x="96" y="144" width="8" height="8" fill="#001aa5"/><rect x="104" y="144" width="8" height="8" fill="#0b24ff"/><rect x="112" y="144" width="8" height="8" fill="#1b20ff"/><rect x="120" y="144" width="8" height="8" fill="#2b1bfe"/><rect x="128" y="144" width="8" height="8" fill="#3c17ff"/><rect x="136" y="144" width="8" height="8" fill="#4d12ff"/><rect x="144" y="144" width="8" height="8" fill="#5e0eff"/><rect x="152" y="144" width="8" height="8" fill="#6f09fe"/><rect x="160" y="144" width="8" height="8" fill="#8004ff"/><rect x="168" y="144" width="8" height="8" fill="#5c00a1"/><rect x="176" y="144" width="8" height="8" fill="#65009e"/><rect x="184" y="144" width="8" height="8" fill="#70009e"/><rect x="192" y="144" width="8" height="8" fill="#7c009e"/><rect x="200" y="144" width="8" height="8" fill="#87009e"/><rect x="208" y="144" width="8" height="8" fill="#93009e"/><rect x="216" y="144" width="8" height="8" fill="#9e009d"/><rect x="224" y="144" width="8" height="8" fill="#9e0092"/><rect x="232" y="144" width="8" height="8" fill="#9e0088"/><rect x="240" y="144" width="8" height="8" fill="#9e0080"/><rect x="248" y="144" width="8" height="8" fill="#9e0078"/><rect x="256" y="144" width="8" height="8" fill="#9e0071"/><rect x="264" y="144" width="8" height="8" fill="#9e006b"/><rect x="272" y="144" width="8" height="8" fill="#9e0066"/><rect x="280" y="144" width="8" height="8" fill="#9e0060"/><rect x="288" y="144" width="8" height="8" fill="#9e005c"/><rect x="48" y="152" width="8" height="8" fill="#00249e"/><rect x="56" y="152" width="8" height="8" fill="#00219e"/><rect x="64" y="152" width="8" height="8" fill="#001f9e"/><rect x="72" y="152" width="8" height="8" fill="#001c9e"/><rect x="80" y="152" width="8" height="8" fill="#001ba2"/><rect x="88" y="152" width="8" height="8" fill="#0019a9"/><rect x="96" y="152" width="8" height="8" fill="#0017b0"/><rect x="104" y="152" width="8" height="8" fill="#071eff"/><rect x="112" y="152" width="8" height="8" fill="#171aff"/><rect x="120" y="152" width="8" height="8" fill="#2615ff"/><rect x="128" y="152" width="8" height="8" fill="#3611ff"/><rect x="136" y="152" width="8" height="8" fill="#450dfe"/><rect x="144" y="152" width="8" height="8" fill="#5508ff"/><rect x="152" y="152" width="8" height="8" fill="#6504ff"/><rect x="160" y="152" width="8" height="8" fill="#5100af"/><rect x="168" y="152" width="8" height="8" fill="#5800a7"/><rect x="176" y="152" width="8" height="8" fill="#5e009f"/><rect x="184" y="152" width="8" height="8" fill="#68009e"/><rect x="192" y="152" width="8" height="8" fill="#72009e"/><rect x="200" y="152" width="8" height="8" fill="#7d009e"/><rect x="208" y="152" width="8" height="8" fill="#88009e"/><rect x="216" y="152" width="8" height="8" fill="#93009e"/><rect x="224" y="152" width="8" height="8" fill="#9e009e"/><rect x="232" y="152" width="8" height="8" fill="#9e0093"/><rect x="240" y="152" width="8" height="8" fill="#9e008a"/><rect x="248" y="152" width="8" height="8" fill="#9e0082"/><rect x="256" y="152" width="8" height="8" fill="#9e007a"/><rect x="264" y="152" width="8" height="8" fill="#9e0074"/><rect x="272" y="152" width="8" height="8" fill="#9e006e"/><rect x="280" y="152" width="8" height="8" fill="#9e0068"/><rect x="56" y="160" width="8" height="8" fill="#001d9e"/><rect x="64" y="160" width="8" height="8" fill="#001ba0"/><rect x="72" y="160" width="8" height="8" fill="#001aa7"/><rect x="80" y="160" width="8" height="8" fill="#0018ad"/><rect x="88" y="160" width="8" height="8" fill="#0016b4"/><rect x="96" y="160" width="8" height="8" fill="#0014ba"/><rect x="104" y="160" width="8" height="8" fill="#0418ff"/><rect x="112" y="160" width="8" height="8" fill="#1314ff"/><rect x="120" y="160" width="8" height="8" fill="#2110ff"/><rect x="128" y="160" width="8" height="8" fill="#300cff"/><rect x="136" y="160" width="8" height="8" fill="#3f07ff"/><rect x="144" y="160" width="8" height="8" fill="#4e03fe"/><rect x="152" y="160" width="8" height="8" fill="#4400bb"/><rect x="160" y="160" width="8" height="8" fill="#4c00b4"/><rect x="168" y="160" width="8" height="8" fill="#5400ac"/><rect x="176" y="160" width="8" height="8" fill="#5a00a4"/><rect x="184" y="160" width="8" height="8" fill="#60009e"/><rect x="192" y="160" width="8" height="8" fill="#6a009e"/><rect x="200" y="160" width="8" height="8" fill="#74009e"/><rect x="208" y="160" width="8" height="8" fill="#7e009e"/><rect x="216" y="160" width="8" height="8" fill="#88009e"/><rect x="224" y="160" width="8" height="8" fill="#93009e"/><rect x="232" y="160" width="8" height="8" fill="#9d009e"/><rect x="240" y="160" width="8" height="8" fill="#9e0094"/><rect x="248" y="160" width="8" height="8" fill="#9e008b"/><rect x="256" y="160" width="8" height="8" fill="#9e0084"/><rect x="264" y="160" width="8" height="8" fill="#9e007c"/><rect x="272" y="160" width="8" height="8" fill="#9e0076"/><rect x="56" y="168" width="8" height="8" fill="#001aa5"/><rect x="64" y="168" width="8" height="8" fill="#0019ab"/><rect x="72" y="168" width="8" height="8" fill="#0017b1"/><rect x="80" y="168" width="8" height="8" fill="#0015b7"/><rect x="88" y="168" width="8" height="8" fill="#0013bd"/><rect x="96" y="168" width="8" height="8" fill="#0011c4"/><rect x="104" y="168" width="8" height="8" fill="#0212ff"/><rect x="112" y="168" width="8" height="8" fill="#100fff"/><rect x="120" y="168" width="8" height="8" fill="#1d0bff"/><rect x="128" y="168" width="8" height="8" fill="#2b07ff"/><rect x="136" y="168" width="8" height="8" fill="#3903ff"/><rect x="144" y="168" width="8" height="8" fill="#3700c6"/><rect x="152" y="168" width="8" height="8" fill="#4000bf"/><rect x="160" y="168" width="8" height="8" fill="#4800b8"/><rect x="168" y="168" width="8" height="8" fill="#4f00b1"/><rect x="176" y="168" width="8" height="8" fill="#5600a9"/><rect x="184" y="168" width="8" height="8" fill="#5c00a2"/><rect x="192" y="168" width="8" height="8" fill="#63009e"/><rect x="200" y="168" width="8" height="8" fill="#6c009e"/><rect x="208" y="168" width="8" height="8" fill="#75009e"/><rect x="216" y="168" width="8" height="8" fill="#7f009e"/><rect x="224" y="168" width="8" height="8" fill="#89009e"/><rect x="232" y="168" width="8" height="8" fill="#92009e"/><rect x="240" y="168" width="8" height="8" fill="#9c009e"/><rect x="248" y="168" width="8" height="8" fill="#9e0095"/><rect x="256" y="168" width="8" height="8" fill="#9e008d"/><rect x="264" y="168" width="8" height="8" fill="#9e0085"/><rect x="64" y="176" width="8" height="8" fill="#0016b4"/><rect x="72" y="176" width="8" height="8" fill="#0014ba"/><rect x="80" y="176" width="8" height="8" fill="#0012c0"/><rect x="88" y="176" width="8" height="8" fill="#0010c6"/><rect x="96" y="176" width="8" height="8" fill="#000ecc"/><rect x="104" y="176" width="8" height="8" fill="#000eff"/><rect x="112" y="176" width="8" height="8" fill="#0c0aff"/><rect x="120" y="176" width="8" height="8" fill="#1a06ff"/><rect x="128" y="176" width="8" height="8" fill="#2702ff"/><rect x="136" y="176" width="8" height="8" fill="#2a00d0"/><rect x="144" y="176" width="8" height="8" fill="#3400c9"/><rect x="152" y="176" width="8" height="8" fill="#3c00c2"/><rect x="160" y="176" width="8" height="8" fill="#4400bb"/><rect x="168" y="176" width="8" height="8" fill="#4b00b5"/><rect x="176" y="176" width="8" height="8" fill="#5200ae"/><rect x="184" y="176" width="8" height="8" fill="#5800a7"/><rect x="192" y="176" width="8" height="8" fill="#5d00a0"/><rect x="200" y="176" width="8" height="8" fill="#65009e"/><rect x="208" y="176" width="8" height="8" fill="#6e009e"/><rect x="216" y="176" width="8" height="8" fill="#77009e"/><rect x="224" y="176" width="8" height="8" fill="#80009e"/><rect x="232" y="176" width="8" height="8" fill="#89009e"/><rect x="240" y="176" width="8" height="8" fill="#92009e"/><rect x="248" y="176" width="8" height="8" fill="#9c009e"/><rect x="256" y="176" width="8" height="8" fill="#9e0096"/><rect x="72" y="184" width="8" height="8" fill="#0011c2"/><rect x="80" y="184" width="8" height="8" fill="#000fc8"/><rect x="88" y="184" width="8" height="8" fill="#000dce"/><rect x="96" y="184" width="8" height="8" fill="#000ad4"/><rect x="104" y="184" width="8" height="8" fill="#0008d9"/><rect x="112" y="184" width="8" height="8" fill="#0a06ff"/><rect x="120" y="184" width="8" height="8" fill="#1602fe"/><rect x="128" y="184" width="8" height="8" fill="#1d00d8"/><rect x="136" y="184" width="8" height="8" fill="#2700d2"/><rect x="144" y="184" width="8" height="8" fill="#3000cc"/><rect x="152" y="184" width="8" height="8" fill="#3800c5"/><rect x="160" y="184" width="8" height="8" fill="#4000bf"/><rect x="168" y="184" width="8" height="8" fill="#4800b8"/><rect x="176" y="184" width="8" height="8" fill="#4e00b2"/><rect x="184" y="184" width="8" height="8" fill="#5400ab"/><rect x="192" y="184" width="8" height="8" fill="#5a00a5"/><rect x="200" y="184" width="8" height="8" fill="#5e009e"/><rect x="208" y="184" width="8" height="8" fill="#67009e"/><rect x="216" y="184" width="8" height="8" fill="#6f009e"/><rect x="224" y="184" width="8" height="8" fill="#78009e"/><rect x="232" y="184" width="8" height="8" fill="#81009e"/><rect x="240" y="184" width="8" height="8" fill="#89009e"/><rect x="248" y="184" width="8" height="8" fill="#92009e"/><rect x="72" y="192" width="8" height="8" fill="#000fca"/><rect x="80" y="192" width="8" height="8" fill="#000ccf"/><rect x="88" y="192" width="8" height="8" fill="#000ad5"/><rect x="96" y="192" width="8" height="8" fill="#0007da"/><rect x="104" y="192" width="8" height="8" fill="#0005e0"/><rect x="112" y="192" width="8" height="8" fill="#0702ff"/><rect x="120" y="192" width="8" height="8" fill="#1100e0"/><rect x="128" y="192" width="8" height="8" fill="#1b00da"/><rect x="136" y="192" width="8" height="8" fill="#2400d4"/><rect x="144" y="192" width="8" height="8" fill="#2d00ce"/><rect x="152" y="192" width="8" height="8" fill="#3500c8"/><rect x="160" y="192" width="8" height="8" fill="#3d00c2"/><rect x="168" y="192" width="8" height="8" fill="#4400bc"/><rect x="176" y="192" width="8" height="8" fill="#4b00b5"/><rect x="184" y="192" width="8" height="8" fill="#5100af"/><rect x="192" y="192" width="8" height="8" fill="#5600a9"/><rect x="200" y="192" width="8" height="8" fill="#5b00a2"/><rect x="208" y="192" width="8" height="8" fill="#61009e"/><rect x="216" y="192" width="8" height="8" fill="#69009e"/><rect x="224" y="192" width="8" height="8" fill="#71009e"/><rect x="232" y="192" width="8" height="8" fill="#79009e"/><rect x="240" y="192" width="8" height="8" fill="#81009e"/><rect x="80" y="200" width="8" height="8" fill="#0009d6"/><rect x="88" y="200" width="8" height="8" fill="#0007db"/><rect x="96" y="200" width="8" height="8" fill="#0004e1"/><rect x="104" y="200" width="8" height="8" fill="#0001e5"/><rect x="112" y="200" width="8" height="8" fill="#0400e5"/><rect x="120" y="200" width="8" height="8" fill="#0e00e1"/><rect x="128" y="200" width="8" height="8" fill="#1800dc"/><rect x="136" y="200" width="8" height="8" fill="#2100d6"/><rect x="144" y="200" width="8" height="8" fill="#2900d0"/><rect x="152" y="200" width="8" height="8" fill="#3200ca"/><rect x="160" y="200" width="8" height="8" fill="#3900c5"/><rect x="168" y="200" width="8" height="8" fill="#4000bf"/><rect x="176" y="200" width="8" height="8" fill="#4700b9"/><rect x="184" y="200" width="8" height="8" fill="#4d00b3"/><rect x="192" y="200" width="8" height="8" fill="#5300ad"/><rect x="200" y="200" width="8" height="8" fill="#5800a7"/><rect x="208" y="200" width="8" height="8" fill="#5d00a1"/><rect x="216" y="200" width="8" height="8" fill="#63009e"/><rect x="224" y="200" width="8" height="8" fill="#6a009e"/><rect x="232" y="200" width="8" height="8" fill="#72009e"/><rect x="88" y="208" width="8" height="8" fill="#0004e1"/><rect x="96" y="208" width="8" height="8" fill="#0001e5"/><rect x="104" y="208" width="8" height="8" fill="#0000e5"/><rect x="112" y="208" width="8" height="8" fill="#0300e5"/><rect x="120" y="208" width="8" height="8" fill="#0c00e3"/><rect x="128" y="208" width="8" height="8" fill="#1500dd"/><rect x="136" y="208" width="8" height="8" fill="#1e00d8"/><rect x="144" y="208" width="8" height="8" fill="#2700d2"/><rect x="152" y="208" width="8" height="8" fill="#2e00cd"/><rect x="160" y="208" width="8" height="8" fill="#3600c7"/><rect x="168" y="208" width="8" height="8" fill="#3d00c1"/><rect x="176" y="208" width="8" height="8" fill="#4400bc"/><rect x="184" y="208" width="8" height="8" fill="#4a00b6"/><rect x="192" y="208" width="8" height="8" fill="#5000b0"/><rect x="200" y="208" width="8" height="8" fill="#5500ab"/><rect x="208" y="208" width="8" height="8" fill="#5a00a5"/><rect x="216" y="208" width="8" height="8" fill="#5e009f"/><rect x="224" y="208" width="8" height="8" fill="#64009e"/><rect x="96" y="216" width="8" height="8" fill="#0000e5"/><rect x="104" y="216" width="8" height="8" fill="#0000e5"/><rect x="112" y="216" width="8" height="8" fill="#0100e5"/><rect x="120" y="216" width="8" height="8" fill="#0a00e4"/><rect x="128" y="216" width="8" height="8" fill="#1300df"/><rect x="136" y="216" width="8" height="8" fill="#1c00d9"/><rect x="144" y="216" width="8" height="8" fill="#2400d4"/><rect x="152" y="216" width="8" height="8" fill="#2c00cf"/><rect x="160" y="216" width="8" height="8" fill="#3300c9"/><rect x="168" y="216" width="8" height="8" fill="#3a00c4"/><rect x="176" y="216" width="8" height="8" fill="#4000bf"/><rect x="184" y="216" width="8" height="8" fill="#4700b9"/><rect x="192" y="216" width="8" height="8" fill="#4c00b4"/><rect x="200" y="216" width="8" height="8" fill="#5200ae"/><rect x="208" y="216" width="8" height="8" fill="#5600a9"/><rect x="216" y="216" width="8" height="8" fill="#5b00a3"/><rect x="104" y="224" width="8" height="8" fill="#0000e5"/><rect x="112" y="224" width="8" height="8" fill="#0000e5"/><rect x="120" y="224" width="8" height="8" fill="#0800e5"/><rect x="128" y="224" width="8" height="8" fill="#1100e0"/><rect x="136" y="224" width="8" height="8" fill="#1900db"/><rect x="144" y="224" width="8" height="8" fill="#2100d6"/><rect x="152" y="224" width="8" height="8" fill="#2900d1"/><rect x="160" y="224" width="8" height="8" fill="#3000cc"/><rect x="168" y="224" width="8" height="8" fill="#3700c6"/><rect x="176" y="224" width="8" height="8" fill="#3d00c1"/><rect x="184" y="224" width="8" height="8" fill="#4400bc"/><rect x="192" y="224" width="8" height="8" fill="#4900b7"/><rect x="200" y="224" width="8" height="8" fill="#4f00b1"/><rect x="208" y="224" width="8" height="8" fill="#5400ac"/><rect x="112" y="232" width="8" height="8" fill="#0000e5"/><rect x="120" y="232" width="8" height="8" fill="#0600e5"/><rect x="128" y="232" width="8" height="8" fill="#0f00e1"/><rect x="136" y="232" width="8" height="8" fill="#1700dc"/><rect x="144" y="232" width="8" height="8" fill="#1f00d7"/><rect x="152" y="232" width="8" height="8" fill="#2600d2"/><rect x="160" y="232" width="8" height="8" fill="#2d00ce"/><rect x="168" y="232" width="8" height="8" fill="#3400c9"/><rect x="176" y="232" width="8" height="8" fill="#3a00c4"/><rect x="184" y="232" width="8" height="8" fill="#4100bf"/><rect x="192" y="232" width="8" height="8" fill="#4600ba"/><rect x="200" y="232" width="8" height="8" fill="#4c00b4"/><rect x="120" y="240" width="8" height="8" fill="#0500e5"/><rect x="128" y="240" width="8" height="8" fill="#0d00e2"/><rect x="136" y="240" width="8" height="8" fill="#1500dd"/><rect x="144" y="240" width="8" height="8" fill="#1c00d9"/><rect x="152" y="240" width="8" height="8" fill="#2400d4"/><rect x="160" y="240" width="8" height="8" fill="#2b00cf"/><rect x="168" y="240" width="8" height="8" fill="#3100cb"/><rect x="176" y="240" width="8" height="8" fill="#3800c6"/><rect x="184" y="240" width="8" height="8" fill="#3e00c1"/><rect x="192" y="240" width="8" height="8" fill="#4300bc"/><rect x="128" y="248" width="8" height="8" fill="#0b00e3"/><rect x="136" y="248" width="8" height="8" fill="#1300df"/><rect x="144" y="248" width="8" height="8" fill="#1a00da"/><rect x="152" y="248" width="8" height="8" fill="#2100d6"/><rect x="160" y="248" width="8" height="8" fill="#2800d1"/><rect x="168" y="248" width="8" height="8" fill="#2f00cc"/><rect x="176" y="248" width="8" height="8" fill="#3500c8"/><rect x="184" y="248" width="8" height="8" fill="#3b00c3"/><rect x="136" y="256" width="8" height="8" fill="#1100e0"/><rect x="144" y="256" width="8" height="8" fill="#1800db"/><rect x="152" y="256" width="8" height="8" fill="#1f00d7"/><rect x="160" y="256" width="8" height="8" fill="#2600d3"/><rect x="168" y="256" width="8" height="8" fill="#2c00ce"/><rect x="176" y="256" width="8" height="8" fill="#3200ca"/><rect x="152" y="264" width="8" height="8" fill="#1d00d8"/><rect x="160" y="264" width="8" height="8" fill="#2400d4"/><rect x="168" y="264" width="8" height="8" fill="#2a00d0"/></g></svg>
<canvas id="cie" width="764" height="556" style="position:absolute;left:610.5px;top:60.6px;width:382px;height:278px"></canvas>
<div class="r" style="left:610.0px;top:60.1px;width:383.5px;height:1px;background:#9a9a9a"></div>
<div class="r" style="left:992.5px;top:60.1px;width:1px;height:279.4px;background:#9a9a9a"></div>
<div class="r" style="left:610.0px;top:60.1px;width:1px;height:282.4px;background:#aaa"></div>
<div class="r" style="left:610.0px;top:338.5px;width:383.5px;height:1px;background:#aaa"></div>
<div class="r" style="left:606.5px;top:338.3px;width:4px;height:1px;background:#aaa"></div>
<div class="t" style="left:567.00px;width:40px;text-align:right;top:334.26px;font-size:9.5px;color:#ddd;font-weight:normal;transform-origin:100% 0;">0</div>
<div class="r" style="left:606.5px;top:315.12px;width:4px;height:1px;background:#aaa"></div>
<div class="t" style="left:567.00px;width:40px;text-align:right;top:311.08px;font-size:9.5px;color:#ddd;font-weight:normal;transform-origin:100% 0;">0,05</div>
<div class="r" style="left:606.5px;top:291.94px;width:4px;height:1px;background:#aaa"></div>
<div class="t" style="left:567.00px;width:40px;text-align:right;top:287.90px;font-size:9.5px;color:#ddd;font-weight:normal;transform-origin:100% 0;">0,1</div>
<div class="r" style="left:606.5px;top:268.76px;width:4px;height:1px;background:#aaa"></div>
<div class="t" style="left:567.00px;width:40px;text-align:right;top:264.72px;font-size:9.5px;color:#ddd;font-weight:normal;transform-origin:100% 0;">0,15</div>
<div class="r" style="left:606.5px;top:245.58px;width:4px;height:1px;background:#aaa"></div>
<div class="t" style="left:567.00px;width:40px;text-align:right;top:241.54px;font-size:9.5px;color:#ddd;font-weight:normal;transform-origin:100% 0;">0,2</div>
<div class="r" style="left:606.5px;top:222.4px;width:4px;height:1px;background:#aaa"></div>
<div class="t" style="left:567.00px;width:40px;text-align:right;top:218.36px;font-size:9.5px;color:#ddd;font-weight:normal;transform-origin:100% 0;">0,25</div>
<div class="r" style="left:606.5px;top:199.22px;width:4px;height:1px;background:#aaa"></div>
<div class="t" style="left:567.00px;width:40px;text-align:right;top:195.18px;font-size:9.5px;color:#ddd;font-weight:normal;transform-origin:100% 0;">0,3</div>
<div class="r" style="left:606.5px;top:176.04px;width:4px;height:1px;background:#aaa"></div>
<div class="t" style="left:567.00px;width:40px;text-align:right;top:172.00px;font-size:9.5px;color:#ddd;font-weight:normal;transform-origin:100% 0;">0,35</div>
<div class="r" style="left:606.5px;top:152.86px;width:4px;height:1px;background:#aaa"></div>
<div class="t" style="left:567.00px;width:40px;text-align:right;top:148.82px;font-size:9.5px;color:#ddd;font-weight:normal;transform-origin:100% 0;">0,4</div>
<div class="r" style="left:606.5px;top:129.68px;width:4px;height:1px;background:#aaa"></div>
<div class="t" style="left:567.00px;width:40px;text-align:right;top:125.64px;font-size:9.5px;color:#ddd;font-weight:normal;transform-origin:100% 0;">0,45</div>
<div class="r" style="left:606.5px;top:106.5px;width:4px;height:1px;background:#aaa"></div>
<div class="t" style="left:567.00px;width:40px;text-align:right;top:102.46px;font-size:9.5px;color:#ddd;font-weight:normal;transform-origin:100% 0;">0,5</div>
<div class="r" style="left:606.5px;top:83.32px;width:4px;height:1px;background:#aaa"></div>
<div class="t" style="left:567.00px;width:40px;text-align:right;top:79.28px;font-size:9.5px;color:#ddd;font-weight:normal;transform-origin:100% 0;">0,55</div>
<div class="r" style="left:610.0px;top:339.0px;width:1px;height:3.5px;background:#aaa"></div>
<div class="t" style="left:590.50px;width:40px;text-align:center;top:344.46px;font-size:9.5px;color:#ddd;font-weight:normal;transform-origin:50% 0;">0</div>
<div class="r" style="left:642.0px;top:339.0px;width:1px;height:3.5px;background:#aaa"></div>
<div class="t" style="left:622.50px;width:40px;text-align:center;top:344.46px;font-size:9.5px;color:#ddd;font-weight:normal;transform-origin:50% 0;">0,05</div>
<div class="r" style="left:674.0px;top:339.0px;width:1px;height:3.5px;background:#aaa"></div>
<div class="t" style="left:654.50px;width:40px;text-align:center;top:344.46px;font-size:9.5px;color:#ddd;font-weight:normal;transform-origin:50% 0;">0,1</div>
<div class="r" style="left:706.0px;top:339.0px;width:1px;height:3.5px;background:#aaa"></div>
<div class="t" style="left:686.50px;width:40px;text-align:center;top:344.46px;font-size:9.5px;color:#ddd;font-weight:normal;transform-origin:50% 0;">0,15</div>
<div class="r" style="left:738.0px;top:339.0px;width:1px;height:3.5px;background:#aaa"></div>
<div class="t" style="left:718.50px;width:40px;text-align:center;top:344.46px;font-size:9.5px;color:#ddd;font-weight:normal;transform-origin:50% 0;">0,2</div>
<div class="r" style="left:770.0px;top:339.0px;width:1px;height:3.5px;background:#aaa"></div>
<div class="t" style="left:750.50px;width:40px;text-align:center;top:344.46px;font-size:9.5px;color:#ddd;font-weight:normal;transform-origin:50% 0;">0,25</div>
<div class="r" style="left:802.0px;top:339.0px;width:1px;height:3.5px;background:#aaa"></div>
<div class="t" style="left:782.50px;width:40px;text-align:center;top:344.46px;font-size:9.5px;color:#ddd;font-weight:normal;transform-origin:50% 0;">0,3</div>
<div class="r" style="left:834.0px;top:339.0px;width:1px;height:3.5px;background:#aaa"></div>
<div class="t" style="left:814.50px;width:40px;text-align:center;top:344.46px;font-size:9.5px;color:#ddd;font-weight:normal;transform-origin:50% 0;">0,35</div>
<div class="r" style="left:866.0px;top:339.0px;width:1px;height:3.5px;background:#aaa"></div>
<div class="t" style="left:846.50px;width:40px;text-align:center;top:344.46px;font-size:9.5px;color:#ddd;font-weight:normal;transform-origin:50% 0;">0,4</div>
<div class="r" style="left:898.0px;top:339.0px;width:1px;height:3.5px;background:#aaa"></div>
<div class="t" style="left:878.50px;width:40px;text-align:center;top:344.46px;font-size:9.5px;color:#ddd;font-weight:normal;transform-origin:50% 0;">0,45</div>
<div class="r" style="left:930.0px;top:339.0px;width:1px;height:3.5px;background:#aaa"></div>
<div class="t" style="left:910.50px;width:40px;text-align:center;top:344.46px;font-size:9.5px;color:#ddd;font-weight:normal;transform-origin:50% 0;">0,5</div>
<div class="r" style="left:962.0px;top:339.0px;width:1px;height:3.5px;background:#aaa"></div>
<div class="t" style="left:942.50px;width:40px;text-align:center;top:344.46px;font-size:9.5px;color:#ddd;font-weight:normal;transform-origin:50% 0;">0,55</div>
<svg class="r" style="left:0;top:0" width="1000" height="528" viewBox="0 0 1000 528"><defs><clipPath id="pc"><rect x="610.5" y="60.6" width="382.5" height="278.4"/></clipPath></defs><g clip-path="url(#pc)"><rect x="684.9" y="72.8" width="8.4" height="8.4" fill="none" stroke="#f4f4f4" stroke-opacity="0.85" stroke-width="1.45"/><rect x="735.2" y="77.3" width="8.4" height="8.4" fill="none" stroke="#f4f4f4" stroke-opacity="0.85" stroke-width="1.45"/><rect x="724.3" y="83.1" width="8.4" height="8.4" fill="none" stroke="#f4f4f4" stroke-opacity="0.85" stroke-width="1.45"/><rect x="702.3" y="88.4" width="8.4" height="8.4" fill="none" stroke="#f4f4f4" stroke-opacity="0.85" stroke-width="1.45"/><rect x="750.8" y="80.3" width="8.4" height="8.4" fill="none" stroke="#f4f4f4" stroke-opacity="0.85" stroke-width="1.45"/><rect x="768.2" y="83.8" width="8.4" height="8.4" fill="none" stroke="#f4f4f4" stroke-opacity="0.85" stroke-width="1.45"/><rect x="723.5" y="96.0" width="8.4" height="8.4" fill="none" stroke="#f4f4f4" stroke-opacity="0.85" stroke-width="1.45"/><rect x="705.3" y="113.1" width="8.4" height="8.4" fill="none" stroke="#f4f4f4" stroke-opacity="0.85" stroke-width="1.45"/><rect x="694.0" y="123.2" width="8.4" height="8.4" fill="none" stroke="#f4f4f4" stroke-opacity="0.85" stroke-width="1.45"/><rect x="718.2" y="134.6" width="8.4" height="8.4" fill="none" stroke="#f4f4f4" stroke-opacity="0.85" stroke-width="1.45"/><rect x="791.2" y="87.3" width="8.4" height="8.4" fill="none" stroke="#f4f4f4" stroke-opacity="0.85" stroke-width="1.45"/><rect x="772.5" y="91.6" width="8.4" height="8.4" fill="none" stroke="#f4f4f4" stroke-opacity="0.85" stroke-width="1.45"/><rect x="779.3" y="93.7" width="8.4" height="8.4" fill="none" stroke="#f4f4f4" stroke-opacity="0.85" stroke-width="1.45"/><rect x="778.4" y="98.8" width="8.4" height="8.4" fill="none" stroke="#f4f4f4" stroke-opacity="0.85" stroke-width="1.45"/><rect x="772.5" y="98.4" width="8.4" height="8.4" fill="none" stroke="#f4f4f4" stroke-opacity="0.85" stroke-width="1.45"/><rect x="758.0" y="105.6" width="8.4" height="8.4" fill="none" stroke="#f4f4f4" stroke-opacity="0.85" stroke-width="1.45"/><rect x="752.0" y="108.2" width="8.4" height="8.4" fill="none" stroke="#f4f4f4" stroke-opacity="0.85" stroke-width="1.45"/><rect x="892.8" y="91.3" width="8.4" height="8.4" fill="none" stroke="#f4f4f4" stroke-opacity="0.85" stroke-width="1.45"/><rect x="834.5" y="103.5" width="8.4" height="8.4" fill="none" stroke="#f4f4f4" stroke-opacity="0.85" stroke-width="1.45"/><rect x="800.0" y="110.4" width="8.4" height="8.4" fill="none" stroke="#f4f4f4" stroke-opacity="0.85" stroke-width="1.45"/><rect x="784.1" y="135.4" width="8.4" height="8.4" fill="none" stroke="#f4f4f4" stroke-opacity="0.85" stroke-width="1.45"/><rect x="749.5" y="147.9" width="8.4" height="8.4" fill="none" stroke="#f4f4f4" stroke-opacity="0.85" stroke-width="1.45"/><rect x="720.1" y="164.9" width="8.4" height="8.4" fill="none" stroke="#f4f4f4" stroke-opacity="0.85" stroke-width="1.45"/><rect x="720.1" y="189.5" width="8.4" height="8.4" fill="none" stroke="#f4f4f4" stroke-opacity="0.85" stroke-width="1.45"/><rect x="799.9" y="180.9" width="8.4" height="8.4" fill="none" stroke="#f4f4f4" stroke-opacity="0.85" stroke-width="1.45"/><rect x="717.8" y="261.1" width="8.4" height="8.4" fill="none" stroke="#f4f4f4" stroke-opacity="0.85" stroke-width="1.45"/><rect x="693.7" y="123.5" width="8.4" height="8.4" fill="none" stroke="#f4f4f4" stroke-opacity="0.85" stroke-width="1.45"/><rect x="696.6" y="139.3" width="8.4" height="8.4" fill="none" stroke="#f4f4f4" stroke-opacity="0.85" stroke-width="1.45"/><rect x="718.1" y="136.6" width="8.4" height="8.4" fill="none" stroke="#f4f4f4" stroke-opacity="0.85" stroke-width="1.45"/><rect x="730.7" y="140.0" width="8.4" height="8.4" fill="none" stroke="#f4f4f4" stroke-opacity="0.85" stroke-width="1.45"/><rect x="731.2" y="117.5" width="8.4" height="8.4" fill="#eee" stroke="#000" stroke-width="1.6"/><circle cx="695.2" cy="74.8" r="2.6" fill="#22d022" stroke="#1c1c1c" stroke-width="1.1"/><circle cx="733.8" cy="78.5" r="2.6" fill="#e0e020" stroke="#1c1c1c" stroke-width="1.1"/><circle cx="746.7" cy="81.5" r="2.6" fill="#c8b040" stroke="#1c1c1c" stroke-width="1.1"/><circle cx="724" cy="84.5" r="2.6" fill="#80a050" stroke="#1c1c1c" stroke-width="1.1"/><circle cx="762.6" cy="85.5" r="2.6" fill="#c09040" stroke="#1c1c1c" stroke-width="1.1"/><circle cx="708.8" cy="91" r="2.6" fill="#408040" stroke="#1c1c1c" stroke-width="1.1"/><circle cx="726.2" cy="98.6" r="2.6" fill="#406040" stroke="#1c1c1c" stroke-width="1.1"/><circle cx="713" cy="115.8" r="2.6" fill="#70a090" stroke="#1c1c1c" stroke-width="1.1"/><circle cx="704.7" cy="125.6" r="2.6" fill="#30b0c0" stroke="#1c1c1c" stroke-width="1.1"/><circle cx="733.8" cy="121.4" r="2.6" fill="#909090" stroke="#1c1c1c" stroke-width="1.1"/><circle cx="782.2" cy="88.1" r="2.6" fill="#b07040" stroke="#1c1c1c" stroke-width="1.1"/><circle cx="779.9" cy="90.9" r="2.6" fill="#906050" stroke="#1c1c1c" stroke-width="1.1"/><circle cx="763.9" cy="95.3" r="2.6" fill="#a07060" stroke="#1c1c1c" stroke-width="1.1"/><circle cx="768.6" cy="96.2" r="2.6" fill="#906050" stroke="#1c1c1c" stroke-width="1.1"/><circle cx="759.6" cy="98.8" r="2.6" fill="#b08070" stroke="#1c1c1c" stroke-width="1.1"/><circle cx="772.8" cy="99.2" r="2.6" fill="#a07060" stroke="#1c1c1c" stroke-width="1.1"/><circle cx="766.9" cy="100" r="2.6" fill="#c09080" stroke="#1c1c1c" stroke-width="1.1"/><circle cx="750.7" cy="103" r="2.6" fill="#d0a090" stroke="#1c1c1c" stroke-width="1.1"/><circle cx="755.3" cy="104.3" r="2.6" fill="#906050" stroke="#1c1c1c" stroke-width="1.1"/><circle cx="760" cy="103" r="2.6" fill="#b08070" stroke="#1c1c1c" stroke-width="1.1"/><circle cx="764.7" cy="104.3" r="2.6" fill="#c09080" stroke="#1c1c1c" stroke-width="1.1"/><circle cx="771.5" cy="103.2" r="2.6" fill="#d09080" stroke="#1c1c1c" stroke-width="1.1"/><circle cx="749.8" cy="109" r="2.6" fill="#d0a090" stroke="#1c1c1c" stroke-width="1.1"/><circle cx="754" cy="107.7" r="2.6" fill="#806050" stroke="#1c1c1c" stroke-width="1.1"/><circle cx="750.7" cy="111.5" r="2.6" fill="#c09080" stroke="#1c1c1c" stroke-width="1.1"/><circle cx="792" cy="116.7" r="2.6" fill="#803040" stroke="#1c1c1c" stroke-width="1.1"/><circle cx="890.7" cy="93.4" r="2.6" fill="#d81818" stroke="#1c1c1c" stroke-width="1.1"/><circle cx="825.5" cy="109.3" r="2.6" fill="#903030" stroke="#1c1c1c" stroke-width="1.1"/><circle cx="779.8" cy="142.2" r="2.6" fill="#a05080" stroke="#1c1c1c" stroke-width="1.1"/><circle cx="751.3" cy="155" r="2.6" fill="#603870" stroke="#1c1c1c" stroke-width="1.1"/><circle cx="728.1" cy="166.9" r="2.6" fill="#5070a0" stroke="#1c1c1c" stroke-width="1.1"/><circle cx="729.8" cy="194.2" r="2.6" fill="#4050a0" stroke="#1c1c1c" stroke-width="1.1"/><circle cx="708.1" cy="142.2" r="2.6" fill="#308090" stroke="#1c1c1c" stroke-width="1.1"/><circle cx="725.2" cy="140.5" r="2.6" fill="#6080a0" stroke="#1c1c1c" stroke-width="1.1"/><circle cx="734.9" cy="144.7" r="2.6" fill="#7080a0" stroke="#1c1c1c" stroke-width="1.1"/><circle cx="733.3" cy="125.2" r="2.8" fill="#000"/><circle cx="800.2" cy="199.3" r="1.6" fill="#e020e0"/><circle cx="732.6" cy="273.8" r="1.3" fill="#2020c0"/><defs><linearGradient id="ig" x1="0" y1="0" x2="1" y2="1"><stop offset="0" stop-color="#f89238"/><stop offset="1" stop-color="#ff4220"/></linearGradient></defs><rect x="870.4" y="241.2" width="119.2" height="74" fill="url(#ig)" stroke="#b0a8a0" stroke-width="1"/><rect x="944.3" y="251.6" width="8.4" height="8.4" fill="none" stroke="#f8e8e0" stroke-width="1.2"/><rect x="966.8" y="250.6" width="8.4" height="8.4" fill="none" stroke="#f8e8e0" stroke-width="1.2"/><rect x="890.2" y="264.1" width="8.4" height="8.4" fill="none" stroke="#f8e8e0" stroke-width="1.2"/><rect x="925.6" y="273.5" width="8.4" height="8.4" fill="none" stroke="#f8e8e0" stroke-width="1.2"/><rect x="963.1" y="272.1" width="8.4" height="8.4" fill="none" stroke="#f8e8e0" stroke-width="1.2"/><rect x="937.0" y="280.4" width="8.4" height="8.4" fill="none" stroke="#f8e8e0" stroke-width="1.2"/><rect x="871.3" y="280.4" width="8.4" height="8.4" fill="none" stroke="#f8e8e0" stroke-width="1.2"/><rect x="879.8" y="279.8" width="8.4" height="8.4" fill="none" stroke="#f8e8e0" stroke-width="1.2"/><rect x="880.4" y="287.1" width="8.4" height="8.4" fill="none" stroke="#f8e8e0" stroke-width="1.2"/><rect x="888.1" y="292.8" width="8.4" height="8.4" fill="none" stroke="#f8e8e0" stroke-width="1.2"/><rect x="930.8" y="294.3" width="8.4" height="8.4" fill="none" stroke="#f8e8e0" stroke-width="1.2"/><circle cx="922.9" cy="242.3" r="2.5" fill="#806040" stroke="#3a2010" stroke-width="0.9"/><circle cx="888.75" cy="265.2" r="2.5" fill="#d08050" stroke="#3a2010" stroke-width="0.9"/><circle cx="898.5" cy="272.5" r="2.5" fill="#c07848" stroke="#3a2010" stroke-width="0.9"/><circle cx="915.8" cy="268.3" r="2.5" fill="#603820" stroke="#3a2010" stroke-width="0.9"/><circle cx="892.3" cy="288.75" r="2.5" fill="#d07848" stroke="#3a2010" stroke-width="0.9"/></g></svg>
<div class="r" style="left:839px;top:320px;width:150px;height:17px;background:#2a2a2a"></div>
<div class="t" style="left:841.00px;top:323.18px;font-size:11.6px;color:#eee;font-weight:normal;transform-origin:0 0;transform:scaleX(1.0150);">RGB Triplet: 202, 136, 97</div>
<script>
(function(){
var cv=document.getElementById('cie'); if(!cv||!cv.getContext) return;
var ctx=cv.getContext('2d'); var S=2; var W=cv.width, H=cv.height;
var L=[[164.35, 270.51], [163.65, 270.81], [161.41, 270.37], [157.52, 267.71], [150.2, 261.97], [138.28, 252.73], [120.14, 237.81], [108.14, 226.3], [90.71, 208.2], [71.9, 183.45], [51.5, 152.64], [32.17, 119.33], [16.82, 87.35], [6.41, 60.38], [1.02, 40.34], [-0.28, 26.39], [1.77, 16.8], [6.66, 10.72], [14.79, 7.61], [23.05, 6.46], [32.04, 6.18], [41.17, 6.29], [50.7, 6.71], [60.97, 7.41], [72.13, 8.35], [84.39, 9.52], [97.98, 10.89], [113.02, 12.47], [129.66, 14.24], [147.95, 16.22], [167.9, 18.38], [189.41, 20.71], [212.18, 23.17], [235.56, 25.71], [258.22, 28.16], [300.27, 32.7], [332.96, 36.25], [356.16, 38.76], [373.14, 40.6], [384.32, 41.8], [390.96, 42.52], [396.73, 43.15], [398.97, 43.39]];
var off=document.createElement('canvas'); off.width=W; off.height=H;
var oc=off.getContext('2d'); var im=oc.createImageData(W,H); var d=im.data;
var X0=610.500000, Y0=60.600000;
var DARK=0.620000, GAM=1.000000;
function g(c){ return c<=0?0:Math.pow(c,GAM); }
for(var py=0;py<H;py++){
  var v=(338.8-(Y0+(py+0.5)/S))/463.6;
  for(var px=0;px<W;px++){
    var u=((X0+(px+0.5)/S)-610.5)/640;
    var den=6*u-16*v+12; var x=9*u/den, y=4*v/den;
    if(y<=0.0001){y=0.0001;}
    var XX=x/y, ZZ=(1-x-y)/y;
    var r=3.2406*XX-1.5372-0.4986*ZZ, gg=-0.9689*XX+1.8758+0.0415*ZZ, b=0.0557*XX-0.2040+1.0570*ZZ;
    var inside=(r>=0&&gg>=0&&b>=0);
    if(r<0)r=0; if(gg<0)gg=0; if(b<0)b=0;
    var m=Math.max(r,gg,b); if(m<=0)m=1;
    r/=m; gg/=m; b/=m;
    var Yl=0.2126*r+0.7152*gg+0.0722*b; var f=inside?1:(DARK+0.28*Math.max(0,Math.min(1,(0.2-Yl)/0.12)));
    var i=(py*W+px)*4;
    d[i]=255*g(r)*f; d[i+1]=255*g(gg)*f; d[i+2]=255*g(b)*f; d[i+3]=255;
  }
}
oc.putImageData(im,0,0);
ctx.save(); ctx.beginPath();
for(var k=0;k<L.length;k++){ var p=L[k]; if(k==0) ctx.moveTo(p[0]*S,p[1]*S); else ctx.lineTo(p[0]*S,p[1]*S); }
ctx.closePath(); ctx.clip(); ctx.drawImage(off,0,0); ctx.restore();
})();
</script>
</body></html>
